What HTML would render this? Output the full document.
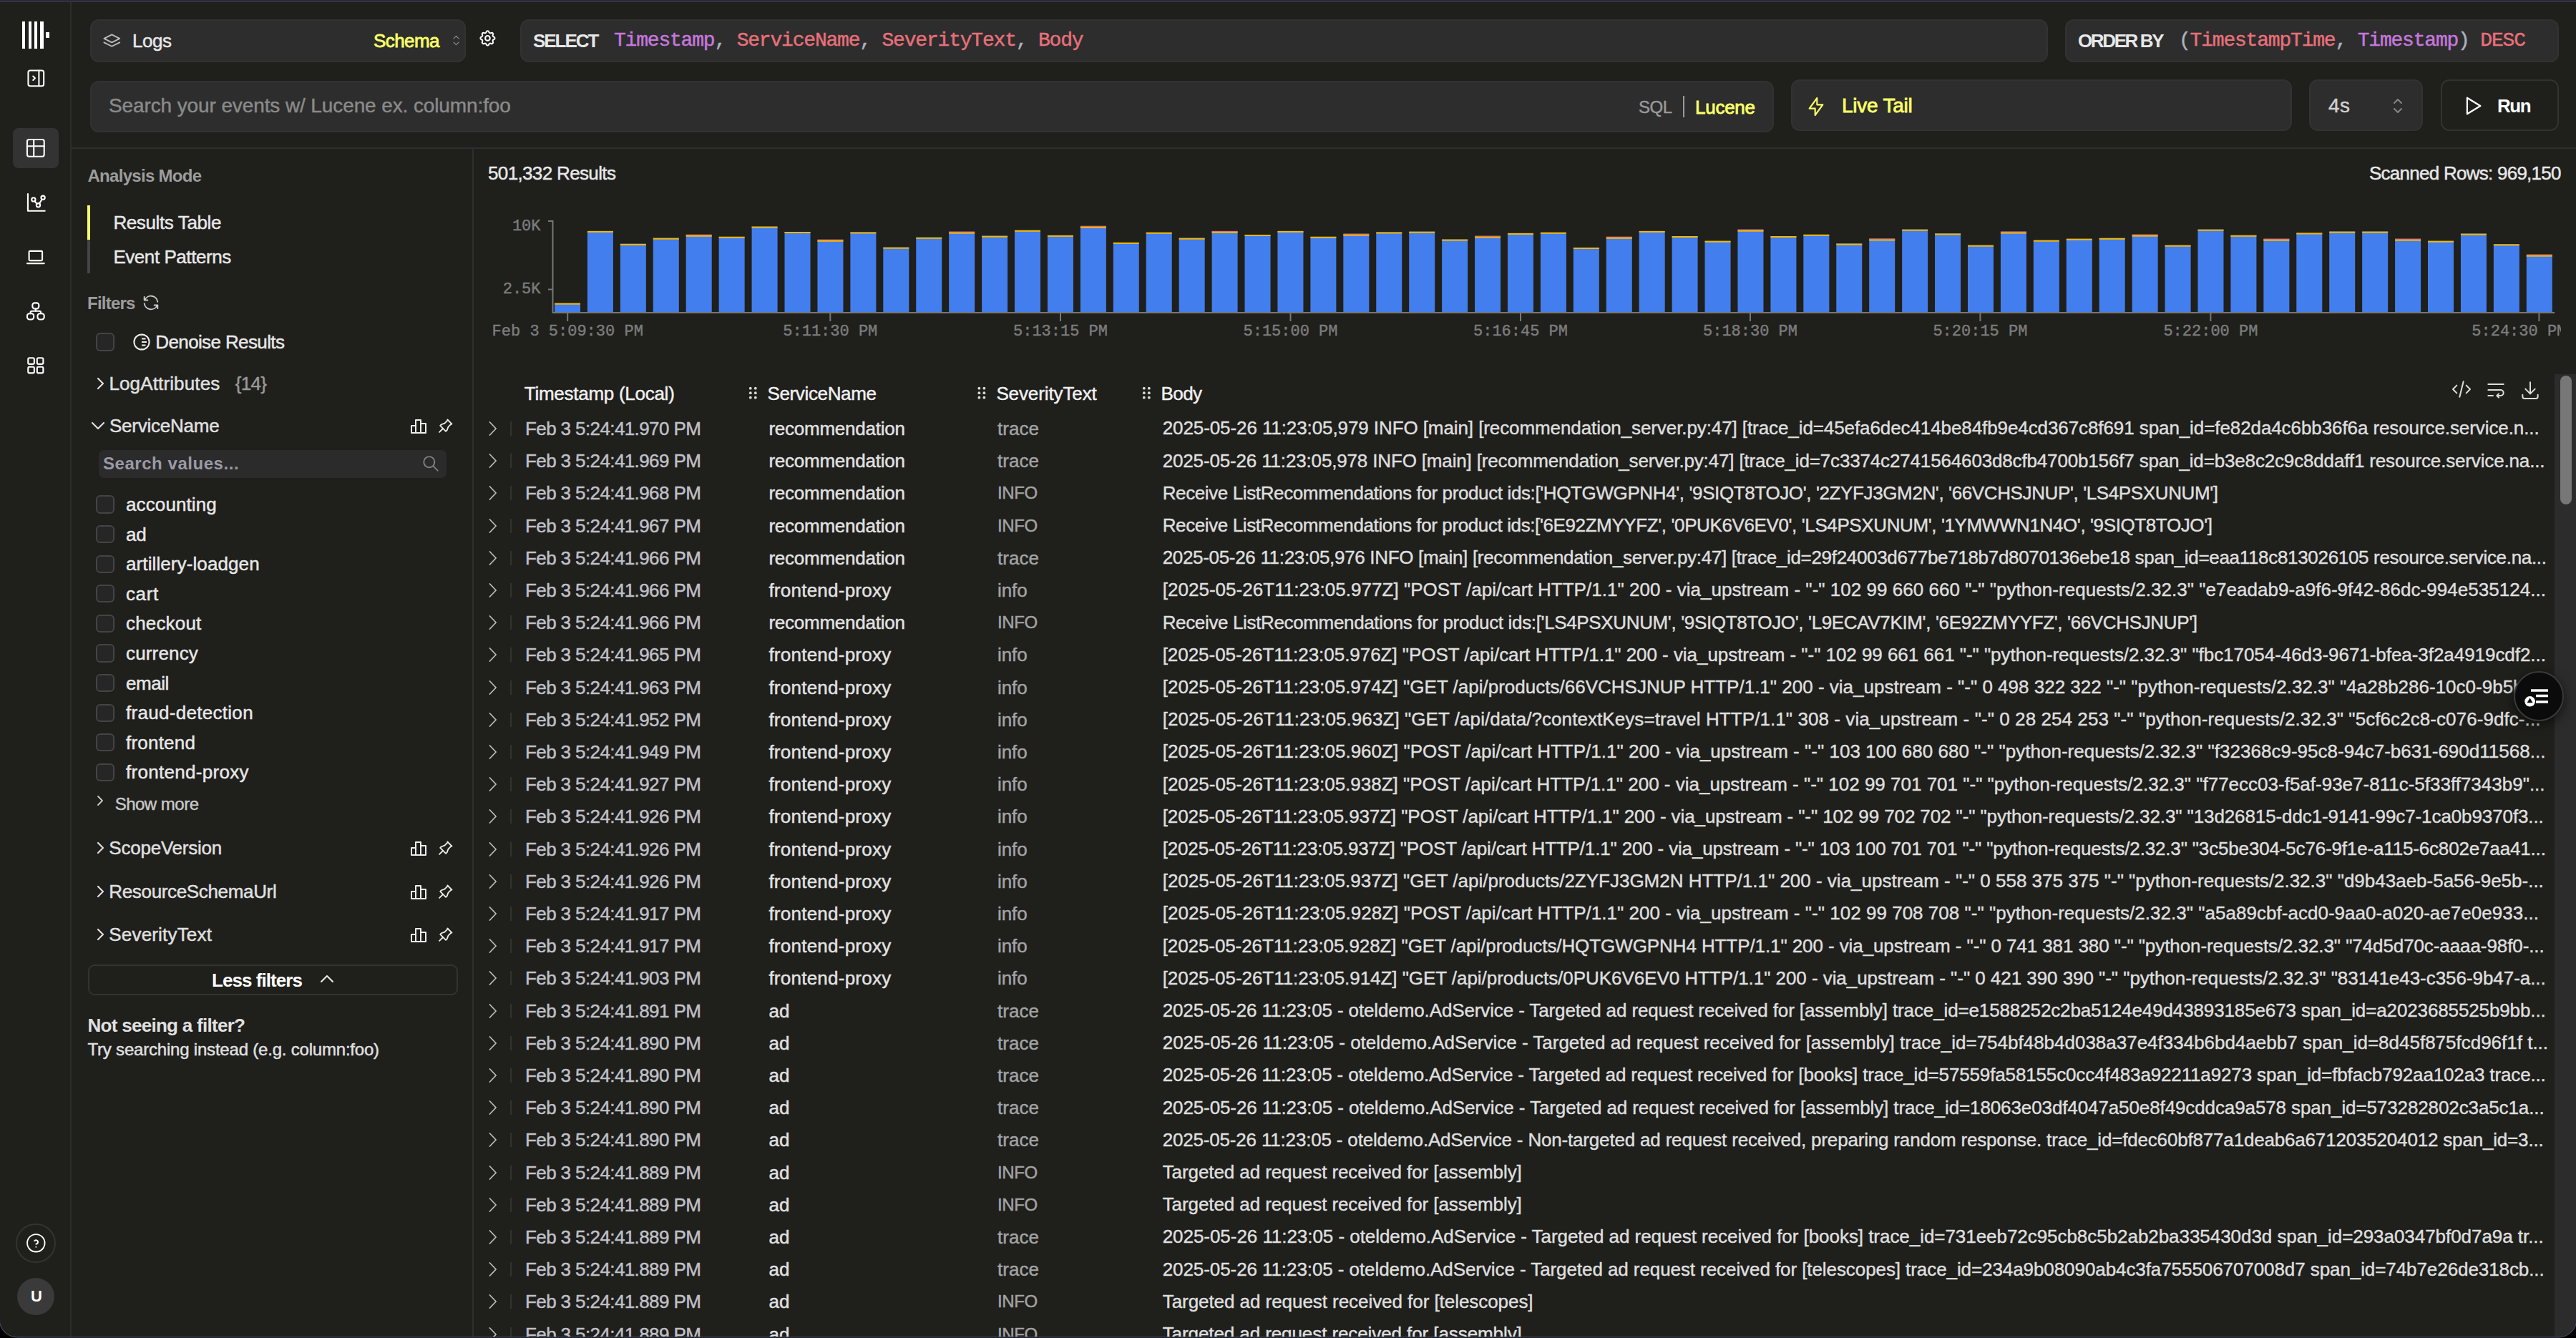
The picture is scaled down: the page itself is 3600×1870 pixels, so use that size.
<!DOCTYPE html><html><head><meta charset="utf-8"><style>
html,body{margin:0;padding:0;width:3600px;height:1870px;overflow:hidden;background:#000;}
#w{position:absolute;left:0;top:0;width:3600px;height:1868px;background:#1f1f1c;overflow:hidden;border-radius:0 0 24px 24px;}
.t{position:absolute;white-space:nowrap;-webkit-text-stroke-width:0.45px;}
.b{position:absolute;}
</style></head><body><div id="w">
<div class="b" style="left:0px;top:0px;width:3600.00px;height:2.00px;background:#282737;border-radius:0px;"></div>
<div class="b" style="left:0px;top:2px;width:3600.00px;height:1.00px;background:#3b3b45;border-radius:0px;"></div>
<div class="b" style="left:98px;top:3px;width:2.00px;height:1867.00px;background:#2c2c2c;border-radius:0px;"></div>
<div class="b" style="left:31px;top:30px;width:4.40px;height:38.00px;background:#fff;border-radius:0px;"></div>
<div class="b" style="left:39.6px;top:30px;width:4.40px;height:38.00px;background:#fff;border-radius:0px;"></div>
<div class="b" style="left:47.8px;top:30px;width:4.40px;height:38.00px;background:#fff;border-radius:0px;"></div>
<div class="b" style="left:56.2px;top:30px;width:4.40px;height:38.00px;background:#fff;border-radius:0px;"></div>
<div class="b" style="left:64.4px;top:45px;width:4.60px;height:8.00px;background:#fff;border-radius:0px;"></div>
<svg class="b" style="left:33.68px;top:92.68px;" width="32.64" height="32.64" viewBox="0 0 24 24" fill="none" stroke="#fff" stroke-width="1.5" stroke-linecap="round" stroke-linejoin="round"><rect x="4" y="4" width="16" height="16" rx="2"/><path d="M15 4v16"/><path d="M9 10l2 2l-2 2"/></svg>
<div class="b" style="left:18px;top:179px;width:64.00px;height:56.00px;background:#333333;border-radius:8px;"></div>
<svg class="b" style="left:34.16px;top:191.16px;" width="31.68" height="31.68" viewBox="0 0 24 24" fill="none" stroke="#fff" stroke-width="1.6" stroke-linecap="round" stroke-linejoin="round"><path d="M3 5a2 2 0 0 1 2 -2h14a2 2 0 0 1 2 2v14a2 2 0 0 1 -2 2h-14a2 2 0 0 1 -2 -2v-14z"/><path d="M3 10h18"/><path d="M10 3v18"/></svg>
<svg class="b" style="left:34.66px;top:267.16px;" width="31.68" height="31.68" viewBox="0 0 24 24" fill="none" stroke="#fff" stroke-width="1.6" stroke-linecap="round" stroke-linejoin="round"><path d="M3 3v18h18"/><circle cx="9" cy="9" r="2"/><circle cx="19" cy="7" r="2"/><circle cx="14" cy="15" r="2"/><path d="M10.16 10.62l2.34 2.88"/><path d="M15.088 13.328l2.837 -4.586"/></svg>
<svg class="b" style="left:34.16px;top:343.00px;" width="31.68" height="31.68" viewBox="0 0 24 24" fill="none" stroke="#fff" stroke-width="1.6" stroke-linecap="round" stroke-linejoin="round"><path d="M3 19h18"/><rect x="5" y="6" width="14" height="10" rx="1"/></svg>
<svg class="b" style="left:34.16px;top:419.16px;" width="31.68" height="31.68" viewBox="0 0 24 24" fill="none" stroke="#fff" stroke-width="1.6" stroke-linecap="round" stroke-linejoin="round"><rect x="8.6" y="3.3" width="6.8" height="6.2" rx="2.4"/><rect x="3" y="14.6" width="7" height="6.2" rx="2.4"/><rect x="14" y="14.6" width="7" height="6.2" rx="2.4"/><path d="M12 9.5v2.3"/><path d="M6.5 14.6v-1a1.7 1.7 0 0 1 1.7 -1.7h7.6a1.7 1.7 0 0 1 1.7 1.7v1"/></svg>
<svg class="b" style="left:34.16px;top:494.66px;" width="31.68" height="31.68" viewBox="0 0 24 24" fill="none" stroke="#fff" stroke-width="1.6" stroke-linecap="round" stroke-linejoin="round"><rect x="4" y="4" width="6.5" height="6.5" rx="1.4"/><rect x="13.5" y="4" width="6.5" height="6.5" rx="1.4"/><rect x="4" y="13.5" width="6.5" height="6.5" rx="1.4"/><rect x="13.5" y="13.5" width="6.5" height="6.5" rx="1.4"/></svg>
<div class="b" style="left:22.3px;top:1709.8px;width:55.4px;height:55.4px;border-radius:50%;border:2px solid #333;box-sizing:border-box"></div>
<svg class="b" style="left:33.68px;top:1721.18px;" width="32.64" height="32.64" viewBox="0 0 24 24" fill="none" stroke="#fff" stroke-width="1.4" stroke-linecap="round" stroke-linejoin="round"><circle cx="12" cy="12" r="9"/><path d="M12 16v.01"/><path d="M12 13a2 2 0 0 0 .914 -3.782a1.98 1.98 0 0 0 -2.414 .483"/></svg>
<div class="b" style="left:24px;top:1786px;width:52px;height:52px;border-radius:50%;background:#3a3a3a"></div>
<div class="t" style="left:43.00px;top:1789.50px;height:44px;line-height:44px;font-size:22px;color:#fff;font-weight:700;font-family:'Liberation Sans', sans-serif;letter-spacing:-1.391px;-webkit-text-stroke-width:0;">U</div>
<div class="b" style="left:126px;top:27px;width:525.00px;height:60.00px;background:#2d2d2d;border:2px solid #323232;box-sizing:border-box;border-radius:12px;"></div>
<svg class="b" style="left:139.68px;top:43.40px;" width="32.64" height="32.64" viewBox="0 0 24 24" fill="none" stroke="#bbb" stroke-width="1.4" stroke-linecap="round" stroke-linejoin="round"><path d="M12 4l-8 4l8 4l8 -4l-8 -4"/><path d="M4 12l8 4l8 -4"/></svg>
<div class="t" style="left:185.00px;top:31.00px;height:52px;line-height:52px;font-size:26px;color:#e8e8e8;font-weight:400;font-family:'Liberation Sans', sans-serif;letter-spacing:-0.464px;">Logs</div>
<div class="t" style="left:522.00px;top:31.00px;height:52px;line-height:52px;font-size:26px;color:#faff69;font-weight:400;font-family:'Liberation Sans', sans-serif;letter-spacing:-0.578px;-webkit-text-stroke-width:0.8px;">Schema</div>
<svg class="b" style="left:627.00px;top:46.00px;" width="21.00" height="21.00" viewBox="0 0 24 24" fill="none" stroke="#888" stroke-width="1.6" stroke-linecap="round" stroke-linejoin="round"><path d="M8 9l4 -4l4 4"/><path d="M16 15l-4 4l-4 -4"/></svg>
<svg class="b" style="left:667.56px;top:39.56px;" width="26.88" height="26.88" viewBox="0 0 24 24" fill="none" stroke="#fff" stroke-width="1.8" stroke-linecap="round" stroke-linejoin="round"><path d="M10.325 4.317c.426 -1.756 2.924 -1.756 3.35 0a1.724 1.724 0 0 0 2.573 1.066c1.543 -.94 3.31 .826 2.37 2.37a1.724 1.724 0 0 0 1.065 2.572c1.756 .426 1.756 2.924 0 3.35a1.724 1.724 0 0 0 -1.066 2.573c.94 1.543 -.826 3.31 -2.37 2.37a1.724 1.724 0 0 0 -2.572 1.065c-.426 1.756 -2.924 1.756 -3.35 0a1.724 1.724 0 0 0 -2.573 -1.066c-1.543 .94 -3.31 -.826 -2.37 -2.37a1.724 1.724 0 0 0 -1.065 -2.572c-1.756 -.426 -1.756 -2.924 0 -3.35a1.724 1.724 0 0 0 1.066 -2.573c-.94 -1.543 .826 -3.31 2.37 -2.37c1 .608 2.296 .07 2.572 -1.065z"/><circle cx="12" cy="12" r="3"/></svg>
<div class="b" style="left:727px;top:27px;width:2135.00px;height:60.00px;background:#2d2d2d;border:2px solid #323232;box-sizing:border-box;border-radius:12px;"></div>
<div class="t" style="left:745.00px;top:31.00px;height:52px;line-height:52px;font-size:26px;color:#e8e8e8;font-weight:700;font-family:'Liberation Sans', sans-serif;letter-spacing:-2.056px;-webkit-text-stroke-width:0;">SELECT</div>
<div class="t" style="left:858.00px;top:29.00px;height:56px;line-height:56px;font-size:28px;color:#e8707a;font-weight:400;font-family:'Liberation Mono', monospace;letter-spacing:-1.200px;"><span style="color:#c678dd">Timestamp</span><span style="color:#abb2bf">,</span> <span style="color:#e8707a">ServiceName</span><span style="color:#abb2bf">,</span> <span style="color:#e8707a">SeverityText</span><span style="color:#abb2bf">,</span> <span style="color:#e8707a">Body</span></div>
<div class="b" style="left:2886px;top:27px;width:690.00px;height:60.00px;background:#2d2d2d;border:2px solid #323232;box-sizing:border-box;border-radius:12px;"></div>
<div class="t" style="left:2904.00px;top:31.00px;height:52px;line-height:52px;font-size:26px;color:#e8e8e8;font-weight:700;font-family:'Liberation Sans', sans-serif;letter-spacing:-2.379px;-webkit-text-stroke-width:0;">ORDER BY</div>
<div class="t" style="left:3045.00px;top:29.00px;height:56px;line-height:56px;font-size:28px;color:#e8707a;font-weight:400;font-family:'Liberation Mono', monospace;letter-spacing:-1.200px;"><span style="color:#abb2bf">(</span><span style="color:#e8707a">TimestampTime</span><span style="color:#abb2bf">,</span> <span style="color:#c678dd">Timestamp</span><span style="color:#abb2bf">)</span> <span style="color:#e8707a">DESC</span></div>
<div class="b" style="left:126px;top:113px;width:2353.00px;height:72.00px;background:#2d2d2d;border:2px solid #323232;box-sizing:border-box;border-radius:12px;"></div>
<div class="t" style="left:152.00px;top:120.00px;height:56px;line-height:56px;font-size:28px;color:#8a8a8a;font-weight:400;font-family:'Liberation Sans', sans-serif;letter-spacing:-0.111px;">Search your events w/ Lucene ex. column:foo</div>
<div class="t" style="left:2290.00px;top:126.00px;height:48px;line-height:48px;font-size:24px;color:#9a9a9a;font-weight:400;font-family:'Liberation Sans', sans-serif;letter-spacing:-0.466px;">SQL</div>
<div class="b" style="left:2351.6px;top:134px;width:2.00px;height:30.00px;background:#9a9a9a;border-radius:0px;"></div>
<div class="t" style="left:2369.00px;top:124.00px;height:52px;line-height:52px;font-size:26px;color:#faff69;font-weight:400;font-family:'Liberation Sans', sans-serif;letter-spacing:-0.263px;-webkit-text-stroke-width:0.8px;">Lucene</div>
<div class="b" style="left:2503px;top:111px;width:700.00px;height:72.00px;background:#2d2d2d;border:2px solid #323232;box-sizing:border-box;border-radius:12px;"></div>
<svg class="b" style="left:2522.00px;top:133.00px;" width="32.00" height="32.00" viewBox="0 0 24 24" fill="none" stroke="#faff69" stroke-width="1.6" stroke-linecap="round" stroke-linejoin="round"><path d="M13 3l0 7l6 0l-8 11l0 -7l-6 0l8 -11"/></svg>
<div class="t" style="left:2574.00px;top:120.00px;height:56px;line-height:56px;font-size:28px;color:#faff69;font-weight:400;font-family:'Liberation Sans', sans-serif;letter-spacing:-0.245px;-webkit-text-stroke-width:0.8px;">Live Tail</div>
<div class="b" style="left:3227px;top:111px;width:159.00px;height:72.00px;background:#2d2d2d;border:2px solid #323232;box-sizing:border-box;border-radius:12px;"></div>
<div class="t" style="left:3254.00px;top:120.00px;height:56px;line-height:56px;font-size:28px;color:#d0d0d0;font-weight:400;font-family:'Liberation Sans', sans-serif;letter-spacing:0.422px;">4s</div>
<svg class="b" style="left:3339.00px;top:132.00px;" width="24.00" height="32.00" viewBox="0 0 24 32" fill="none" stroke="#888" stroke-width="1.8" stroke-linecap="round" stroke-linejoin="round"><path d="M7 12l5 -5l5 5"/><path d="M17 20l-5 5l-5 -5"/></svg>
<div class="b" style="left:3411px;top:111px;width:165.00px;height:72.00px;background:transparent;border:2px solid #323232;box-sizing:border-box;border-radius:12px;"></div>
<svg class="b" style="left:3438.00px;top:131.00px;" width="34.00" height="34.00" viewBox="0 0 24 24" fill="none" stroke="#fff" stroke-width="1.6" stroke-linecap="round" stroke-linejoin="round"><path d="M7 4v16l13 -8z"/></svg>
<div class="t" style="left:3490.00px;top:122.00px;height:52px;line-height:52px;font-size:26px;color:#fff;font-weight:700;font-family:'Liberation Sans', sans-serif;letter-spacing:-1.473px;-webkit-text-stroke-width:0;">Run</div>
<div class="b" style="left:100px;top:206px;width:3500.00px;height:2.00px;background:#2e2e2e;border-radius:0px;"></div>
<div class="b" style="left:660px;top:208px;width:2.00px;height:1662.00px;background:#2e2e2e;border-radius:0px;"></div>
<div class="t" style="left:122.50px;top:222.00px;height:48px;line-height:48px;font-size:24px;color:#9d9d9d;font-weight:700;font-family:'Liberation Sans', sans-serif;letter-spacing:-0.712px;-webkit-text-stroke-width:0;">Analysis Mode</div>
<div class="b" style="left:122px;top:287px;width:4.00px;height:48.00px;background:#faff69;border-radius:0px;"></div>
<div class="b" style="left:122px;top:335px;width:4.00px;height:47.00px;background:#444;border-radius:0px;"></div>
<div class="t" style="left:158.40px;top:285.00px;height:52px;line-height:52px;font-size:26px;color:#e8e8e8;font-weight:400;font-family:'Liberation Sans', sans-serif;letter-spacing:-0.384px;">Results Table</div>
<div class="t" style="left:158.40px;top:333.00px;height:52px;line-height:52px;font-size:26px;color:#e8e8e8;font-weight:400;font-family:'Liberation Sans', sans-serif;letter-spacing:-0.442px;">Event Patterns</div>
<div class="t" style="left:122.00px;top:399.50px;height:48px;line-height:48px;font-size:24px;color:#9d9d9d;font-weight:700;font-family:'Liberation Sans', sans-serif;letter-spacing:-0.772px;-webkit-text-stroke-width:0;">Filters</div>
<svg class="b" style="left:197.00px;top:409.00px;" width="28.00" height="28.00" viewBox="0 0 24 24" fill="none" stroke="#ccc" stroke-width="1.6" stroke-linecap="round" stroke-linejoin="round"><path d="M20 11a8.1 8.1 0 0 0 -15.5 -2m-.5 -4v4h4"/><path d="M4 13a8.1 8.1 0 0 0 15.5 2m.5 4v-4h-4"/></svg>
<div class="b" style="left:134.4px;top:465.4px;width:25.20px;height:25.20px;background:#262626;border:2px solid #444;box-sizing:border-box;border-radius:6px;"></div>
<svg class="b" style="left:185px;top:465px" width="26" height="26" viewBox="0 0 26 26" fill="none" stroke="#eee" stroke-width="2"><circle cx="13" cy="13" r="10.6"/><path d="M13 4.5v.5M13 21v.5M13 8.5h5.5M13 13h7M13 17.5h5.5" stroke-width="1.8"/></svg>
<div class="t" style="left:217.30px;top:452.00px;height:52px;line-height:52px;font-size:26px;color:#e8e8e8;font-weight:400;font-family:'Liberation Sans', sans-serif;letter-spacing:-0.622px;">Denoise Results</div>
<svg class="b" style="left:127.60px;top:522.50px;" width="24.00" height="26.00" viewBox="0 0 24 26" fill="none" stroke="#ddd" stroke-width="2.2" stroke-linecap="round" stroke-linejoin="round"><path d="M9 6l7 7l-7 7"/></svg>
<div class="t" style="left:152.40px;top:509.50px;height:52px;line-height:52px;font-size:26px;color:#e0e0e0;font-weight:400;font-family:'Liberation Sans', sans-serif;letter-spacing:0.140px;">LogAttributes</div>
<div class="t" style="left:328.70px;top:509.50px;height:52px;line-height:52px;font-size:26px;color:#9a9a9a;font-weight:400;font-family:'Liberation Sans', sans-serif;letter-spacing:-0.666px;">{14}</div>
<svg class="b" style="left:124.80px;top:583.00px;" width="24.00" height="24.00" viewBox="0 0 24 24" fill="none" stroke="#ddd" stroke-width="2.2" stroke-linecap="round" stroke-linejoin="round"><path d="M4 8l8 8l8 -8"/></svg>
<div class="t" style="left:153.00px;top:569.00px;height:52px;line-height:52px;font-size:26px;color:#e0e0e0;font-weight:400;font-family:'Liberation Sans', sans-serif;letter-spacing:-0.236px;">ServiceName</div>
<svg class="b" style="left:571.00px;top:581.00px;" width="30.00" height="28.00" viewBox="0 0 30 28" fill="none" stroke="#eee" stroke-width="2" stroke-linecap="round" stroke-linejoin="round"><path d="M4 14h6v10h-6z M10 6h7v18h-7z M17 11h7v13h-7z"/></svg>
<svg class="b" style="left:609.00px;top:582.00px;" width="27.00" height="27.00" viewBox="0 0 24 24" fill="none" stroke="#eee" stroke-width="1.6" stroke-linecap="round" stroke-linejoin="round"><path d="M15 4.5l-4 4l-4 1.5l-1.5 1.5l7 7l1.5 -1.5l1.5 -4l4 -4"/><path d="M9 15l-4.5 4.5"/><path d="M14.5 4l5.5 5.5"/></svg>
<div class="b" style="left:138px;top:628.5px;width:486.00px;height:39.00px;background:#2b2b2b;border-radius:7px;"></div>
<div class="t" style="left:144.00px;top:624.00px;height:48px;line-height:48px;font-size:24px;color:#9a9aa6;font-weight:700;font-family:'Liberation Sans', sans-serif;letter-spacing:0.543px;-webkit-text-stroke-width:0;">Search values...</div>
<svg class="b" style="left:589.00px;top:635.00px;" width="26.00" height="26.00" viewBox="0 0 24 24" fill="none" stroke="#888" stroke-width="1.6" stroke-linecap="round" stroke-linejoin="round"><circle cx="10" cy="10" r="7"/><path d="M21 21l-6 -6"/></svg>
<div class="b" style="left:134.4px;top:692.4px;width:25.20px;height:25.20px;background:#262626;border:2px solid #444;box-sizing:border-box;border-radius:6px;"></div>
<div class="t" style="left:176.00px;top:679.00px;height:52px;line-height:52px;font-size:26px;color:#e8e8e8;font-weight:400;font-family:'Liberation Sans', sans-serif;letter-spacing:0.115px;">accounting</div>
<div class="b" style="left:134.4px;top:734.0px;width:25.20px;height:25.20px;background:#262626;border:2px solid #444;box-sizing:border-box;border-radius:6px;"></div>
<div class="t" style="left:176.00px;top:720.60px;height:52px;line-height:52px;font-size:26px;color:#e8e8e8;font-weight:400;font-family:'Liberation Sans', sans-serif;letter-spacing:-0.222px;">ad</div>
<div class="b" style="left:134.4px;top:775.6px;width:25.20px;height:25.20px;background:#262626;border:2px solid #444;box-sizing:border-box;border-radius:6px;"></div>
<div class="t" style="left:176.00px;top:762.20px;height:52px;line-height:52px;font-size:26px;color:#e8e8e8;font-weight:400;font-family:'Liberation Sans', sans-serif;letter-spacing:0.101px;">artillery-loadgen</div>
<div class="b" style="left:134.4px;top:817.1999999999999px;width:25.20px;height:25.20px;background:#262626;border:2px solid #444;box-sizing:border-box;border-radius:6px;"></div>
<div class="t" style="left:176.00px;top:803.80px;height:52px;line-height:52px;font-size:26px;color:#e8e8e8;font-weight:400;font-family:'Liberation Sans', sans-serif;letter-spacing:0.619px;">cart</div>
<div class="b" style="left:134.4px;top:858.8px;width:25.20px;height:25.20px;background:#262626;border:2px solid #444;box-sizing:border-box;border-radius:6px;"></div>
<div class="t" style="left:176.00px;top:845.40px;height:52px;line-height:52px;font-size:26px;color:#e8e8e8;font-weight:400;font-family:'Liberation Sans', sans-serif;letter-spacing:0.175px;">checkout</div>
<div class="b" style="left:134.4px;top:900.4px;width:25.20px;height:25.20px;background:#262626;border:2px solid #444;box-sizing:border-box;border-radius:6px;"></div>
<div class="t" style="left:176.00px;top:887.00px;height:52px;line-height:52px;font-size:26px;color:#e8e8e8;font-weight:400;font-family:'Liberation Sans', sans-serif;letter-spacing:0.157px;">currency</div>
<div class="b" style="left:134.4px;top:942.0px;width:25.20px;height:25.20px;background:#262626;border:2px solid #444;box-sizing:border-box;border-radius:6px;"></div>
<div class="t" style="left:176.00px;top:928.60px;height:52px;line-height:52px;font-size:26px;color:#e8e8e8;font-weight:400;font-family:'Liberation Sans', sans-serif;letter-spacing:-0.435px;">email</div>
<div class="b" style="left:134.4px;top:983.6px;width:25.20px;height:25.20px;background:#262626;border:2px solid #444;box-sizing:border-box;border-radius:6px;"></div>
<div class="t" style="left:176.00px;top:970.20px;height:52px;line-height:52px;font-size:26px;color:#e8e8e8;font-weight:400;font-family:'Liberation Sans', sans-serif;letter-spacing:0.296px;">fraud-detection</div>
<div class="b" style="left:134.4px;top:1025.2px;width:25.20px;height:25.20px;background:#262626;border:2px solid #444;box-sizing:border-box;border-radius:6px;"></div>
<div class="t" style="left:176.00px;top:1011.80px;height:52px;line-height:52px;font-size:26px;color:#e8e8e8;font-weight:400;font-family:'Liberation Sans', sans-serif;letter-spacing:0.213px;">frontend</div>
<div class="b" style="left:134.4px;top:1066.8000000000002px;width:25.20px;height:25.20px;background:#262626;border:2px solid #444;box-sizing:border-box;border-radius:6px;"></div>
<div class="t" style="left:176.00px;top:1053.40px;height:52px;line-height:52px;font-size:26px;color:#e8e8e8;font-weight:400;font-family:'Liberation Sans', sans-serif;letter-spacing:0.303px;">frontend-proxy</div>
<svg class="b" style="left:131.00px;top:1108.00px;" width="18.00" height="22.00" viewBox="0 0 18 22" fill="none" stroke="#ccc" stroke-width="1.8" stroke-linecap="round" stroke-linejoin="round"><path d="M6 5l6 6l-6 6"/></svg>
<div class="t" style="left:160.70px;top:1100.40px;height:48px;line-height:48px;font-size:24px;color:#c8c8c8;font-weight:400;font-family:'Liberation Sans', sans-serif;letter-spacing:-0.511px;">Show more</div>
<svg class="b" style="left:127.60px;top:1172.30px;" width="24.00" height="26.00" viewBox="0 0 24 26" fill="none" stroke="#ddd" stroke-width="2.2" stroke-linecap="round" stroke-linejoin="round"><path d="M9 6l7 7l-7 7"/></svg>
<div class="t" style="left:152.30px;top:1159.30px;height:52px;line-height:52px;font-size:26px;color:#e0e0e0;font-weight:400;font-family:'Liberation Sans', sans-serif;letter-spacing:-0.223px;">ScopeVersion</div>
<svg class="b" style="left:571.00px;top:1171.30px;" width="30.00" height="28.00" viewBox="0 0 30 28" fill="none" stroke="#eee" stroke-width="2" stroke-linecap="round" stroke-linejoin="round"><path d="M4 14h6v10h-6z M10 6h7v18h-7z M17 11h7v13h-7z"/></svg>
<svg class="b" style="left:609.00px;top:1172.30px;" width="27.00" height="27.00" viewBox="0 0 24 24" fill="none" stroke="#eee" stroke-width="1.6" stroke-linecap="round" stroke-linejoin="round"><path d="M15 4.5l-4 4l-4 1.5l-1.5 1.5l7 7l1.5 -1.5l1.5 -4l4 -4"/><path d="M9 15l-4.5 4.5"/><path d="M14.5 4l5.5 5.5"/></svg>
<svg class="b" style="left:127.60px;top:1232.50px;" width="24.00" height="26.00" viewBox="0 0 24 26" fill="none" stroke="#ddd" stroke-width="2.2" stroke-linecap="round" stroke-linejoin="round"><path d="M9 6l7 7l-7 7"/></svg>
<div class="t" style="left:152.30px;top:1219.50px;height:52px;line-height:52px;font-size:26px;color:#e0e0e0;font-weight:400;font-family:'Liberation Sans', sans-serif;letter-spacing:-0.342px;">ResourceSchemaUrl</div>
<svg class="b" style="left:571.00px;top:1231.50px;" width="30.00" height="28.00" viewBox="0 0 30 28" fill="none" stroke="#eee" stroke-width="2" stroke-linecap="round" stroke-linejoin="round"><path d="M4 14h6v10h-6z M10 6h7v18h-7z M17 11h7v13h-7z"/></svg>
<svg class="b" style="left:609.00px;top:1232.50px;" width="27.00" height="27.00" viewBox="0 0 24 24" fill="none" stroke="#eee" stroke-width="1.6" stroke-linecap="round" stroke-linejoin="round"><path d="M15 4.5l-4 4l-4 1.5l-1.5 1.5l7 7l1.5 -1.5l1.5 -4l4 -4"/><path d="M9 15l-4.5 4.5"/><path d="M14.5 4l5.5 5.5"/></svg>
<svg class="b" style="left:127.60px;top:1292.70px;" width="24.00" height="26.00" viewBox="0 0 24 26" fill="none" stroke="#ddd" stroke-width="2.2" stroke-linecap="round" stroke-linejoin="round"><path d="M9 6l7 7l-7 7"/></svg>
<div class="t" style="left:152.30px;top:1279.70px;height:52px;line-height:52px;font-size:26px;color:#e0e0e0;font-weight:400;font-family:'Liberation Sans', sans-serif;letter-spacing:0.181px;">SeverityText</div>
<svg class="b" style="left:571.00px;top:1291.70px;" width="30.00" height="28.00" viewBox="0 0 30 28" fill="none" stroke="#eee" stroke-width="2" stroke-linecap="round" stroke-linejoin="round"><path d="M4 14h6v10h-6z M10 6h7v18h-7z M17 11h7v13h-7z"/></svg>
<svg class="b" style="left:609.00px;top:1292.70px;" width="27.00" height="27.00" viewBox="0 0 24 24" fill="none" stroke="#eee" stroke-width="1.6" stroke-linecap="round" stroke-linejoin="round"><path d="M15 4.5l-4 4l-4 1.5l-1.5 1.5l7 7l1.5 -1.5l1.5 -4l4 -4"/><path d="M9 15l-4.5 4.5"/><path d="M14.5 4l5.5 5.5"/></svg>
<div class="b" style="left:123px;top:1347.5px;width:517.00px;height:43.00px;background:transparent;border:2px solid #333;box-sizing:border-box;border-radius:9px;"></div>
<div class="t" style="left:296.00px;top:1343.80px;height:52px;line-height:52px;font-size:26px;color:#fff;font-weight:700;font-family:'Liberation Sans', sans-serif;letter-spacing:-0.936px;-webkit-text-stroke-width:0;">Less filters</div>
<svg class="b" style="left:446.00px;top:1358.00px;" width="22.00" height="20.00" viewBox="0 0 22 20" fill="none" stroke="#eee" stroke-width="2" stroke-linecap="round" stroke-linejoin="round"><path d="M3 14l8 -8l8 8"/></svg>
<div class="t" style="left:122.50px;top:1406.60px;height:52px;line-height:52px;font-size:26px;color:#e0e0e0;font-weight:700;font-family:'Liberation Sans', sans-serif;letter-spacing:-0.713px;-webkit-text-stroke-width:0;">Not seeing a filter?</div>
<div class="t" style="left:122.50px;top:1442.60px;height:48px;line-height:48px;font-size:24px;color:#e0e0e0;font-weight:400;font-family:'Liberation Sans', sans-serif;letter-spacing:-0.203px;">Try searching instead (e.g. column:foo)</div>
<div class="t" style="left:682.00px;top:216.40px;height:52px;line-height:52px;font-size:26px;color:#e8e8e8;font-weight:400;font-family:'Liberation Sans', sans-serif;letter-spacing:-0.643px;">501,332 Results</div>
<div class="t" style="left:3311.00px;top:216.00px;height:52px;line-height:52px;font-size:26px;color:#e8e8e8;font-weight:400;font-family:'Liberation Sans', sans-serif;letter-spacing:-0.741px;">Scanned Rows: 969,150</div>
<svg class="b" style="left:0;top:0" width="3600" height="500"><rect x="775.00" y="423.70" width="36" height="13.80" fill="#437eef"/><rect x="775.00" y="423.70" width="36" height="2" fill="#f5b800"/><rect x="820.93" y="322.90" width="36" height="114.60" fill="#437eef"/><rect x="820.93" y="322.90" width="36" height="2" fill="#f5b800"/><rect x="866.86" y="340.80" width="36" height="96.70" fill="#437eef"/><rect x="866.86" y="340.80" width="36" height="2" fill="#f5b800"/><rect x="912.79" y="332.70" width="36" height="104.80" fill="#437eef"/><rect x="912.79" y="332.70" width="36" height="2" fill="#f5b800"/><rect x="958.72" y="327.80" width="36" height="109.70" fill="#437eef"/><rect x="958.72" y="327.80" width="36" height="1.2" fill="#ef6d5f"/><rect x="958.72" y="329.00" width="36" height="1.8" fill="#f5b800"/><rect x="1004.65" y="330.80" width="36" height="106.70" fill="#437eef"/><rect x="1004.65" y="330.80" width="36" height="2" fill="#f5b800"/><rect x="1050.58" y="316.60" width="36" height="120.90" fill="#437eef"/><rect x="1050.58" y="316.60" width="36" height="2" fill="#f5b800"/><rect x="1096.51" y="324.00" width="36" height="113.50" fill="#437eef"/><rect x="1096.51" y="324.00" width="36" height="2" fill="#f5b800"/><rect x="1142.44" y="334.80" width="36" height="102.70" fill="#437eef"/><rect x="1142.44" y="334.80" width="36" height="1.2" fill="#ef6d5f"/><rect x="1142.44" y="336.00" width="36" height="1.8" fill="#f5b800"/><rect x="1188.37" y="324.50" width="36" height="113.00" fill="#437eef"/><rect x="1188.37" y="324.50" width="36" height="2" fill="#f5b800"/><rect x="1234.30" y="345.70" width="36" height="91.80" fill="#437eef"/><rect x="1234.30" y="345.70" width="36" height="2" fill="#f5b800"/><rect x="1280.23" y="331.80" width="36" height="105.70" fill="#437eef"/><rect x="1280.23" y="331.80" width="36" height="2" fill="#f5b800"/><rect x="1326.16" y="323.70" width="36" height="113.80" fill="#437eef"/><rect x="1326.16" y="323.70" width="36" height="1.2" fill="#ef6d5f"/><rect x="1326.16" y="324.90" width="36" height="1.8" fill="#f5b800"/><rect x="1372.09" y="329.70" width="36" height="107.80" fill="#437eef"/><rect x="1372.09" y="329.70" width="36" height="2" fill="#f5b800"/><rect x="1418.02" y="321.80" width="36" height="115.70" fill="#437eef"/><rect x="1418.02" y="321.80" width="36" height="2" fill="#f5b800"/><rect x="1463.95" y="328.90" width="36" height="108.60" fill="#437eef"/><rect x="1463.95" y="328.90" width="36" height="2" fill="#f5b800"/><rect x="1509.88" y="315.80" width="36" height="121.70" fill="#437eef"/><rect x="1509.88" y="315.80" width="36" height="1.2" fill="#ef6d5f"/><rect x="1509.88" y="317.00" width="36" height="1.8" fill="#f5b800"/><rect x="1555.81" y="338.90" width="36" height="98.60" fill="#437eef"/><rect x="1555.81" y="338.90" width="36" height="2" fill="#f5b800"/><rect x="1601.74" y="324.80" width="36" height="112.70" fill="#437eef"/><rect x="1601.74" y="324.80" width="36" height="2" fill="#f5b800"/><rect x="1647.67" y="332.70" width="36" height="104.80" fill="#437eef"/><rect x="1647.67" y="332.70" width="36" height="2" fill="#f5b800"/><rect x="1693.60" y="322.90" width="36" height="114.60" fill="#437eef"/><rect x="1693.60" y="322.90" width="36" height="1.2" fill="#ef6d5f"/><rect x="1693.60" y="324.10" width="36" height="1.8" fill="#f5b800"/><rect x="1739.53" y="328.00" width="36" height="109.50" fill="#437eef"/><rect x="1739.53" y="328.00" width="36" height="2" fill="#f5b800"/><rect x="1785.46" y="322.90" width="36" height="114.60" fill="#437eef"/><rect x="1785.46" y="322.90" width="36" height="2" fill="#f5b800"/><rect x="1831.39" y="330.80" width="36" height="106.70" fill="#437eef"/><rect x="1831.39" y="330.80" width="36" height="2" fill="#f5b800"/><rect x="1877.32" y="326.70" width="36" height="110.80" fill="#437eef"/><rect x="1877.32" y="326.70" width="36" height="1.2" fill="#ef6d5f"/><rect x="1877.32" y="327.90" width="36" height="1.8" fill="#f5b800"/><rect x="1923.25" y="324.50" width="36" height="113.00" fill="#437eef"/><rect x="1923.25" y="324.50" width="36" height="2" fill="#f5b800"/><rect x="1969.18" y="323.70" width="36" height="113.80" fill="#437eef"/><rect x="1969.18" y="323.70" width="36" height="2" fill="#f5b800"/><rect x="2015.11" y="334.60" width="36" height="102.90" fill="#437eef"/><rect x="2015.11" y="334.60" width="36" height="2" fill="#f5b800"/><rect x="2061.04" y="329.70" width="36" height="107.80" fill="#437eef"/><rect x="2061.04" y="329.70" width="36" height="1.2" fill="#ef6d5f"/><rect x="2061.04" y="330.90" width="36" height="1.8" fill="#f5b800"/><rect x="2106.97" y="325.90" width="36" height="111.60" fill="#437eef"/><rect x="2106.97" y="325.90" width="36" height="2" fill="#f5b800"/><rect x="2152.90" y="324.80" width="36" height="112.70" fill="#437eef"/><rect x="2152.90" y="324.80" width="36" height="2" fill="#f5b800"/><rect x="2198.83" y="346.00" width="36" height="91.50" fill="#437eef"/><rect x="2198.83" y="346.00" width="36" height="2" fill="#f5b800"/><rect x="2244.76" y="330.80" width="36" height="106.70" fill="#437eef"/><rect x="2244.76" y="330.80" width="36" height="1.2" fill="#ef6d5f"/><rect x="2244.76" y="332.00" width="36" height="1.8" fill="#f5b800"/><rect x="2290.69" y="322.90" width="36" height="114.60" fill="#437eef"/><rect x="2290.69" y="322.90" width="36" height="2" fill="#f5b800"/><rect x="2336.62" y="330.00" width="36" height="107.50" fill="#437eef"/><rect x="2336.62" y="330.00" width="36" height="2" fill="#f5b800"/><rect x="2382.55" y="336.70" width="36" height="100.80" fill="#437eef"/><rect x="2382.55" y="336.70" width="36" height="2" fill="#f5b800"/><rect x="2428.48" y="320.70" width="36" height="116.80" fill="#437eef"/><rect x="2428.48" y="320.70" width="36" height="1.2" fill="#ef6d5f"/><rect x="2428.48" y="321.90" width="36" height="1.8" fill="#f5b800"/><rect x="2474.41" y="330.00" width="36" height="107.50" fill="#437eef"/><rect x="2474.41" y="330.00" width="36" height="2" fill="#f5b800"/><rect x="2520.34" y="327.80" width="36" height="109.70" fill="#437eef"/><rect x="2520.34" y="327.80" width="36" height="2" fill="#f5b800"/><rect x="2566.27" y="340.50" width="36" height="97.00" fill="#437eef"/><rect x="2566.27" y="340.50" width="36" height="2" fill="#f5b800"/><rect x="2612.20" y="333.50" width="36" height="104.00" fill="#437eef"/><rect x="2612.20" y="333.50" width="36" height="1.2" fill="#ef6d5f"/><rect x="2612.20" y="334.70" width="36" height="1.8" fill="#f5b800"/><rect x="2658.13" y="320.70" width="36" height="116.80" fill="#437eef"/><rect x="2658.13" y="320.70" width="36" height="2" fill="#f5b800"/><rect x="2704.06" y="326.40" width="36" height="111.10" fill="#437eef"/><rect x="2704.06" y="326.40" width="36" height="2" fill="#f5b800"/><rect x="2749.99" y="342.70" width="36" height="94.80" fill="#437eef"/><rect x="2749.99" y="342.70" width="36" height="2" fill="#f5b800"/><rect x="2795.92" y="323.60" width="36" height="113.90" fill="#437eef"/><rect x="2795.92" y="323.60" width="36" height="1.2" fill="#ef6d5f"/><rect x="2795.92" y="324.80" width="36" height="1.8" fill="#f5b800"/><rect x="2841.85" y="335.70" width="36" height="101.80" fill="#437eef"/><rect x="2841.85" y="335.70" width="36" height="2" fill="#f5b800"/><rect x="2887.78" y="333.70" width="36" height="103.80" fill="#437eef"/><rect x="2887.78" y="333.70" width="36" height="2" fill="#f5b800"/><rect x="2933.71" y="332.80" width="36" height="104.70" fill="#437eef"/><rect x="2933.71" y="332.80" width="36" height="2" fill="#f5b800"/><rect x="2979.64" y="327.70" width="36" height="109.80" fill="#437eef"/><rect x="2979.64" y="327.70" width="36" height="1.2" fill="#ef6d5f"/><rect x="2979.64" y="328.90" width="36" height="1.8" fill="#f5b800"/><rect x="3025.57" y="342.70" width="36" height="94.80" fill="#437eef"/><rect x="3025.57" y="342.70" width="36" height="2" fill="#f5b800"/><rect x="3071.50" y="320.70" width="36" height="116.80" fill="#437eef"/><rect x="3071.50" y="320.70" width="36" height="2" fill="#f5b800"/><rect x="3117.43" y="328.80" width="36" height="108.70" fill="#437eef"/><rect x="3117.43" y="328.80" width="36" height="2" fill="#f5b800"/><rect x="3163.36" y="333.70" width="36" height="103.80" fill="#437eef"/><rect x="3163.36" y="333.70" width="36" height="1.2" fill="#ef6d5f"/><rect x="3163.36" y="334.90" width="36" height="1.8" fill="#f5b800"/><rect x="3209.29" y="325.50" width="36" height="112.00" fill="#437eef"/><rect x="3209.29" y="325.50" width="36" height="2" fill="#f5b800"/><rect x="3255.22" y="323.60" width="36" height="113.90" fill="#437eef"/><rect x="3255.22" y="323.60" width="36" height="2" fill="#f5b800"/><rect x="3301.15" y="323.60" width="36" height="113.90" fill="#437eef"/><rect x="3301.15" y="323.60" width="36" height="2" fill="#f5b800"/><rect x="3347.08" y="333.70" width="36" height="103.80" fill="#437eef"/><rect x="3347.08" y="333.70" width="36" height="1.2" fill="#ef6d5f"/><rect x="3347.08" y="334.90" width="36" height="1.8" fill="#f5b800"/><rect x="3393.01" y="336.70" width="36" height="100.80" fill="#437eef"/><rect x="3393.01" y="336.70" width="36" height="2" fill="#f5b800"/><rect x="3438.94" y="326.60" width="36" height="110.90" fill="#437eef"/><rect x="3438.94" y="326.60" width="36" height="2" fill="#f5b800"/><rect x="3484.87" y="341.30" width="36" height="96.20" fill="#437eef"/><rect x="3484.87" y="341.30" width="36" height="2" fill="#f5b800"/><rect x="3530.80" y="355.70" width="36" height="81.80" fill="#437eef"/><rect x="3530.80" y="355.70" width="36" height="1.2" fill="#ef6d5f"/><rect x="3530.80" y="356.90" width="36" height="1.8" fill="#f5b800"/><path d="M766 309H772.5V437H3570" stroke="#777" stroke-width="2" fill="none"/><path d="M766 404.5H772.5" stroke="#777" stroke-width="2" fill="none"/><path d="M793.2 437V449" stroke="#777" stroke-width="2"/><path d="M1160.3 437V449" stroke="#777" stroke-width="2"/><path d="M1482 437V449" stroke="#777" stroke-width="2"/><path d="M1803.5 437V449" stroke="#777" stroke-width="2"/><path d="M2125 437V449" stroke="#777" stroke-width="2"/><path d="M2446 437V449" stroke="#777" stroke-width="2"/><path d="M2767.4 437V449" stroke="#777" stroke-width="2"/><path d="M3089.4 437V449" stroke="#777" stroke-width="2"/><path d="M3548.4 437V449" stroke="#777" stroke-width="2"/></svg>
<div class="t" style="right:2844.50px;top:294.50px;height:44px;line-height:44px;font-size:22px;color:#7c7c7c;font-weight:400;font-family:'Liberation Mono', monospace;letter-spacing:0.000px;">10K</div>
<div class="t" style="right:2844.50px;top:383.00px;height:44px;line-height:44px;font-size:22px;color:#7c7c7c;font-weight:400;font-family:'Liberation Mono', monospace;letter-spacing:0.000px;">2.5K</div>
<div class="t" style="left:687.60px;top:442.00px;height:44px;line-height:44px;font-size:22px;color:#7c7c7c;font-weight:400;font-family:'Liberation Mono', monospace;letter-spacing:0.000px;">Feb 3 5:09:30 PM</div>
<div class="t" style="left:1094.30px;top:442.00px;height:44px;line-height:44px;font-size:22px;color:#7c7c7c;font-weight:400;font-family:'Liberation Mono', monospace;letter-spacing:0.000px;">5:11:30 PM</div>
<div class="t" style="left:1416.00px;top:442.00px;height:44px;line-height:44px;font-size:22px;color:#7c7c7c;font-weight:400;font-family:'Liberation Mono', monospace;letter-spacing:0.000px;">5:13:15 PM</div>
<div class="t" style="left:1737.50px;top:442.00px;height:44px;line-height:44px;font-size:22px;color:#7c7c7c;font-weight:400;font-family:'Liberation Mono', monospace;letter-spacing:0.000px;">5:15:00 PM</div>
<div class="t" style="left:2059.00px;top:442.00px;height:44px;line-height:44px;font-size:22px;color:#7c7c7c;font-weight:400;font-family:'Liberation Mono', monospace;letter-spacing:0.000px;">5:16:45 PM</div>
<div class="t" style="left:2380.00px;top:442.00px;height:44px;line-height:44px;font-size:22px;color:#7c7c7c;font-weight:400;font-family:'Liberation Mono', monospace;letter-spacing:0.000px;">5:18:30 PM</div>
<div class="t" style="left:2701.40px;top:442.00px;height:44px;line-height:44px;font-size:22px;color:#7c7c7c;font-weight:400;font-family:'Liberation Mono', monospace;letter-spacing:0.000px;">5:20:15 PM</div>
<div class="t" style="left:3023.40px;top:442.00px;height:44px;line-height:44px;font-size:22px;color:#7c7c7c;font-weight:400;font-family:'Liberation Mono', monospace;letter-spacing:0.000px;">5:22:00 PM</div>
<div class="t" style="left:3454.30px;top:442.00px;height:44px;line-height:44px;font-size:22px;color:#7c7c7c;font-weight:400;font-family:'Liberation Mono', monospace;letter-spacing:0.000px;width:124.70px;overflow:hidden;">5:24:30 PM</div>
<div class="t" style="left:732.80px;top:523.70px;height:52px;line-height:52px;font-size:26px;color:#f0f0f0;font-weight:400;font-family:'Liberation Sans', sans-serif;letter-spacing:-0.270px;">Timestamp (Local)</div>
<svg class="b" style="left:0;top:0;overflow:visible" width="1" height="1"><circle cx="1048.8" cy="542.7" r="1.9" fill="#ddd"/><circle cx="1048.8" cy="549.2" r="1.9" fill="#ddd"/><circle cx="1048.8" cy="555.7" r="1.9" fill="#ddd"/><circle cx="1055.8" cy="542.7" r="1.9" fill="#ddd"/><circle cx="1055.8" cy="549.2" r="1.9" fill="#ddd"/><circle cx="1055.8" cy="555.7" r="1.9" fill="#ddd"/></svg>
<div class="t" style="left:1072.50px;top:523.70px;height:52px;line-height:52px;font-size:26px;color:#f0f0f0;font-weight:400;font-family:'Liberation Sans', sans-serif;letter-spacing:-0.366px;">ServiceName</div>
<svg class="b" style="left:0;top:0;overflow:visible" width="1" height="1"><circle cx="1368.4" cy="542.7" r="1.9" fill="#ddd"/><circle cx="1368.4" cy="549.2" r="1.9" fill="#ddd"/><circle cx="1368.4" cy="555.7" r="1.9" fill="#ddd"/><circle cx="1375.4" cy="542.7" r="1.9" fill="#ddd"/><circle cx="1375.4" cy="549.2" r="1.9" fill="#ddd"/><circle cx="1375.4" cy="555.7" r="1.9" fill="#ddd"/></svg>
<div class="t" style="left:1392.40px;top:523.70px;height:52px;line-height:52px;font-size:26px;color:#f0f0f0;font-weight:400;font-family:'Liberation Sans', sans-serif;letter-spacing:-0.110px;">SeverityText</div>
<svg class="b" style="left:0;top:0;overflow:visible" width="1" height="1"><circle cx="1598.8" cy="542.7" r="1.9" fill="#ddd"/><circle cx="1598.8" cy="549.2" r="1.9" fill="#ddd"/><circle cx="1598.8" cy="555.7" r="1.9" fill="#ddd"/><circle cx="1605.8" cy="542.7" r="1.9" fill="#ddd"/><circle cx="1605.8" cy="549.2" r="1.9" fill="#ddd"/><circle cx="1605.8" cy="555.7" r="1.9" fill="#ddd"/></svg>
<div class="t" style="left:1622.60px;top:523.70px;height:52px;line-height:52px;font-size:26px;color:#f0f0f0;font-weight:400;font-family:'Liberation Sans', sans-serif;letter-spacing:-0.622px;">Body</div>
<svg class="b" style="left:3424.00px;top:528.00px;" width="32.00" height="32.00" viewBox="0 0 24 24" fill="none" stroke="#ddd" stroke-width="1.5" stroke-linecap="round" stroke-linejoin="round"><path d="M7 8l-4 4l4 4"/><path d="M17 8l4 4l-4 4"/><path d="M14 4l-4 16"/></svg>
<svg class="b" style="left:3472.00px;top:529.00px;" width="32.00" height="32.00" viewBox="0 0 24 24" fill="none" stroke="#ddd" stroke-width="1.5" stroke-linecap="round" stroke-linejoin="round"><path d="M4 6l16 0"/><path d="M4 18l5 0"/><path d="M4 12h13a3 3 0 0 1 0 6h-4l2 -2m0 4l-2 -2"/></svg>
<svg class="b" style="left:3520.00px;top:529.00px;" width="32.00" height="32.00" viewBox="0 0 24 24" fill="none" stroke="#ddd" stroke-width="1.5" stroke-linecap="round" stroke-linejoin="round"><path d="M4 17v2a2 2 0 0 0 2 2h12a2 2 0 0 0 2 -2v-2"/><path d="M7 11l5 5l5 -5"/><path d="M12 4l0 12"/></svg>
<div class="b" style="left:3570px;top:523px;width:30.00px;height:1347.00px;background:#2c2c2c;border-radius:0px;"></div>
<div class="b" style="left:3578px;top:525px;width:16.00px;height:180.00px;background:#777;border-radius:8px;"></div>
<svg class="b" style="left:680.00px;top:588.00px;" width="20.00" height="22.00" viewBox="0 0 20 22" fill="none" stroke="#bbb" stroke-width="1.8" stroke-linecap="round" stroke-linejoin="round"><path d="M4.5 2l8.6 9l-8.6 9"/></svg>
<div class="b" style="left:712.8px;top:589.0px;width:2.00px;height:20.00px;background:#333;border-radius:0px;"></div>
<div class="t" style="left:734.00px;top:573.00px;height:52px;line-height:52px;font-size:26px;color:#c0c0c8;font-weight:400;font-family:'Liberation Sans', sans-serif;letter-spacing:-0.605px;">Feb 3 5:24:41.970 PM</div>
<div class="t" style="left:1074.40px;top:573.00px;height:52px;line-height:52px;font-size:26px;color:#e2e2e2;font-weight:400;font-family:'Liberation Sans', sans-serif;letter-spacing:-0.243px;">recommendation</div>
<div class="t" style="left:1394.00px;top:573.00px;height:52px;line-height:52px;font-size:26px;color:#a3a3a3;font-weight:400;font-family:'Liberation Sans', sans-serif;letter-spacing:0.047px;">trace</div>
<div class="t" style="left:1624.70px;top:572.40px;height:52px;line-height:52px;font-size:26px;color:#dedede;font-weight:400;font-family:'Liberation Sans', sans-serif;letter-spacing:-0.090px;">2025-05-26 11:23:05,979 INFO [main] [recommendation_server.py:47] [trace_id=45efa6dec414be84fb9e4cd367c8f691 span_id=fe82da4c6bb36f6a resource.service.n...</div>
<svg class="b" style="left:680.00px;top:633.20px;" width="20.00" height="22.00" viewBox="0 0 20 22" fill="none" stroke="#bbb" stroke-width="1.8" stroke-linecap="round" stroke-linejoin="round"><path d="M4.5 2l8.6 9l-8.6 9"/></svg>
<div class="b" style="left:712.8px;top:634.2px;width:2.00px;height:20.00px;background:#333;border-radius:0px;"></div>
<div class="t" style="left:734.00px;top:618.20px;height:52px;line-height:52px;font-size:26px;color:#c0c0c8;font-weight:400;font-family:'Liberation Sans', sans-serif;letter-spacing:-0.605px;">Feb 3 5:24:41.969 PM</div>
<div class="t" style="left:1074.40px;top:618.20px;height:52px;line-height:52px;font-size:26px;color:#e2e2e2;font-weight:400;font-family:'Liberation Sans', sans-serif;letter-spacing:-0.243px;">recommendation</div>
<div class="t" style="left:1394.00px;top:618.20px;height:52px;line-height:52px;font-size:26px;color:#a3a3a3;font-weight:400;font-family:'Liberation Sans', sans-serif;letter-spacing:0.047px;">trace</div>
<div class="t" style="left:1624.70px;top:617.60px;height:52px;line-height:52px;font-size:26px;color:#dedede;font-weight:400;font-family:'Liberation Sans', sans-serif;letter-spacing:-0.157px;">2025-05-26 11:23:05,978 INFO [main] [recommendation_server.py:47] [trace_id=7c3374c2741564603d8cfb4700b156f7 span_id=b3e8c2c9c8ddaff1 resource.service.na...</div>
<svg class="b" style="left:680.00px;top:678.40px;" width="20.00" height="22.00" viewBox="0 0 20 22" fill="none" stroke="#bbb" stroke-width="1.8" stroke-linecap="round" stroke-linejoin="round"><path d="M4.5 2l8.6 9l-8.6 9"/></svg>
<div class="b" style="left:712.8px;top:679.4px;width:2.00px;height:20.00px;background:#333;border-radius:0px;"></div>
<div class="t" style="left:734.00px;top:663.40px;height:52px;line-height:52px;font-size:26px;color:#c0c0c8;font-weight:400;font-family:'Liberation Sans', sans-serif;letter-spacing:-0.605px;">Feb 3 5:24:41.968 PM</div>
<div class="t" style="left:1074.40px;top:663.40px;height:52px;line-height:52px;font-size:26px;color:#e2e2e2;font-weight:400;font-family:'Liberation Sans', sans-serif;letter-spacing:-0.243px;">recommendation</div>
<div class="t" style="left:1394.00px;top:665.40px;height:48px;line-height:48px;font-size:24px;color:#a3a3a3;font-weight:400;font-family:'Liberation Sans', sans-serif;letter-spacing:-0.376px;">INFO</div>
<div class="t" style="left:1624.70px;top:662.80px;height:52px;line-height:52px;font-size:26px;color:#dedede;font-weight:400;font-family:'Liberation Sans', sans-serif;letter-spacing:-0.383px;">Receive ListRecommendations for product ids:[&#x27;HQTGWGPNH4&#x27;, &#x27;9SIQT8TOJO&#x27;, &#x27;2ZYFJ3GM2N&#x27;, &#x27;66VCHSJNUP&#x27;, &#x27;LS4PSXUNUM&#x27;]</div>
<svg class="b" style="left:680.00px;top:723.60px;" width="20.00" height="22.00" viewBox="0 0 20 22" fill="none" stroke="#bbb" stroke-width="1.8" stroke-linecap="round" stroke-linejoin="round"><path d="M4.5 2l8.6 9l-8.6 9"/></svg>
<div class="b" style="left:712.8px;top:724.6px;width:2.00px;height:20.00px;background:#333;border-radius:0px;"></div>
<div class="t" style="left:734.00px;top:708.60px;height:52px;line-height:52px;font-size:26px;color:#c0c0c8;font-weight:400;font-family:'Liberation Sans', sans-serif;letter-spacing:-0.605px;">Feb 3 5:24:41.967 PM</div>
<div class="t" style="left:1074.40px;top:708.60px;height:52px;line-height:52px;font-size:26px;color:#e2e2e2;font-weight:400;font-family:'Liberation Sans', sans-serif;letter-spacing:-0.243px;">recommendation</div>
<div class="t" style="left:1394.00px;top:710.60px;height:48px;line-height:48px;font-size:24px;color:#a3a3a3;font-weight:400;font-family:'Liberation Sans', sans-serif;letter-spacing:-0.376px;">INFO</div>
<div class="t" style="left:1624.70px;top:708.00px;height:52px;line-height:52px;font-size:26px;color:#dedede;font-weight:400;font-family:'Liberation Sans', sans-serif;letter-spacing:-0.391px;">Receive ListRecommendations for product ids:[&#x27;6E92ZMYYFZ&#x27;, &#x27;0PUK6V6EV0&#x27;, &#x27;LS4PSXUNUM&#x27;, &#x27;1YMWWN1N4O&#x27;, &#x27;9SIQT8TOJO&#x27;]</div>
<svg class="b" style="left:680.00px;top:768.80px;" width="20.00" height="22.00" viewBox="0 0 20 22" fill="none" stroke="#bbb" stroke-width="1.8" stroke-linecap="round" stroke-linejoin="round"><path d="M4.5 2l8.6 9l-8.6 9"/></svg>
<div class="b" style="left:712.8px;top:769.8px;width:2.00px;height:20.00px;background:#333;border-radius:0px;"></div>
<div class="t" style="left:734.00px;top:753.80px;height:52px;line-height:52px;font-size:26px;color:#c0c0c8;font-weight:400;font-family:'Liberation Sans', sans-serif;letter-spacing:-0.605px;">Feb 3 5:24:41.966 PM</div>
<div class="t" style="left:1074.40px;top:753.80px;height:52px;line-height:52px;font-size:26px;color:#e2e2e2;font-weight:400;font-family:'Liberation Sans', sans-serif;letter-spacing:-0.243px;">recommendation</div>
<div class="t" style="left:1394.00px;top:753.80px;height:52px;line-height:52px;font-size:26px;color:#a3a3a3;font-weight:400;font-family:'Liberation Sans', sans-serif;letter-spacing:0.047px;">trace</div>
<div class="t" style="left:1624.70px;top:753.20px;height:52px;line-height:52px;font-size:26px;color:#dedede;font-weight:400;font-family:'Liberation Sans', sans-serif;letter-spacing:-0.319px;">2025-05-26 11:23:05,976 INFO [main] [recommendation_server.py:47] [trace_id=29f24003d677be718b7d8070136ebe18 span_id=eaa118c813026105 resource.service.na...</div>
<svg class="b" style="left:680.00px;top:814.00px;" width="20.00" height="22.00" viewBox="0 0 20 22" fill="none" stroke="#bbb" stroke-width="1.8" stroke-linecap="round" stroke-linejoin="round"><path d="M4.5 2l8.6 9l-8.6 9"/></svg>
<div class="b" style="left:712.8px;top:815.0px;width:2.00px;height:20.00px;background:#333;border-radius:0px;"></div>
<div class="t" style="left:734.00px;top:799.00px;height:52px;line-height:52px;font-size:26px;color:#c0c0c8;font-weight:400;font-family:'Liberation Sans', sans-serif;letter-spacing:-0.605px;">Feb 3 5:24:41.966 PM</div>
<div class="t" style="left:1074.40px;top:799.00px;height:52px;line-height:52px;font-size:26px;color:#e2e2e2;font-weight:400;font-family:'Liberation Sans', sans-serif;letter-spacing:0.242px;">frontend-proxy</div>
<div class="t" style="left:1394.00px;top:799.00px;height:52px;line-height:52px;font-size:26px;color:#a3a3a3;font-weight:400;font-family:'Liberation Sans', sans-serif;letter-spacing:-0.074px;">info</div>
<div class="t" style="left:1624.70px;top:798.40px;height:52px;line-height:52px;font-size:26px;color:#dedede;font-weight:400;font-family:'Liberation Sans', sans-serif;letter-spacing:0.034px;">[2025-05-26T11:23:05.977Z] &quot;POST /api/cart HTTP/1.1&quot; 200 - via_upstream - &quot;-&quot; 102 99 660 660 &quot;-&quot; &quot;python-requests/2.32.3&quot; &quot;e7eadab9-a9f6-9f42-86dc-994e535124...</div>
<svg class="b" style="left:680.00px;top:859.20px;" width="20.00" height="22.00" viewBox="0 0 20 22" fill="none" stroke="#bbb" stroke-width="1.8" stroke-linecap="round" stroke-linejoin="round"><path d="M4.5 2l8.6 9l-8.6 9"/></svg>
<div class="b" style="left:712.8px;top:860.2px;width:2.00px;height:20.00px;background:#333;border-radius:0px;"></div>
<div class="t" style="left:734.00px;top:844.20px;height:52px;line-height:52px;font-size:26px;color:#c0c0c8;font-weight:400;font-family:'Liberation Sans', sans-serif;letter-spacing:-0.605px;">Feb 3 5:24:41.966 PM</div>
<div class="t" style="left:1074.40px;top:844.20px;height:52px;line-height:52px;font-size:26px;color:#e2e2e2;font-weight:400;font-family:'Liberation Sans', sans-serif;letter-spacing:-0.243px;">recommendation</div>
<div class="t" style="left:1394.00px;top:846.20px;height:48px;line-height:48px;font-size:24px;color:#a3a3a3;font-weight:400;font-family:'Liberation Sans', sans-serif;letter-spacing:-0.376px;">INFO</div>
<div class="t" style="left:1624.70px;top:843.60px;height:52px;line-height:52px;font-size:26px;color:#dedede;font-weight:400;font-family:'Liberation Sans', sans-serif;letter-spacing:-0.355px;">Receive ListRecommendations for product ids:[&#x27;LS4PSXUNUM&#x27;, &#x27;9SIQT8TOJO&#x27;, &#x27;L9ECAV7KIM&#x27;, &#x27;6E92ZMYYFZ&#x27;, &#x27;66VCHSJNUP&#x27;]</div>
<svg class="b" style="left:680.00px;top:904.40px;" width="20.00" height="22.00" viewBox="0 0 20 22" fill="none" stroke="#bbb" stroke-width="1.8" stroke-linecap="round" stroke-linejoin="round"><path d="M4.5 2l8.6 9l-8.6 9"/></svg>
<div class="b" style="left:712.8px;top:905.4000000000001px;width:2.00px;height:20.00px;background:#333;border-radius:0px;"></div>
<div class="t" style="left:734.00px;top:889.40px;height:52px;line-height:52px;font-size:26px;color:#c0c0c8;font-weight:400;font-family:'Liberation Sans', sans-serif;letter-spacing:-0.605px;">Feb 3 5:24:41.965 PM</div>
<div class="t" style="left:1074.40px;top:889.40px;height:52px;line-height:52px;font-size:26px;color:#e2e2e2;font-weight:400;font-family:'Liberation Sans', sans-serif;letter-spacing:0.242px;">frontend-proxy</div>
<div class="t" style="left:1394.00px;top:889.40px;height:52px;line-height:52px;font-size:26px;color:#a3a3a3;font-weight:400;font-family:'Liberation Sans', sans-serif;letter-spacing:-0.074px;">info</div>
<div class="t" style="left:1624.70px;top:888.80px;height:52px;line-height:52px;font-size:26px;color:#dedede;font-weight:400;font-family:'Liberation Sans', sans-serif;letter-spacing:-0.047px;">[2025-05-26T11:23:05.976Z] &quot;POST /api/cart HTTP/1.1&quot; 200 - via_upstream - &quot;-&quot; 102 99 661 661 &quot;-&quot; &quot;python-requests/2.32.3&quot; &quot;fbc17054-46d3-9671-bfea-3f2a4919cdf2...</div>
<svg class="b" style="left:680.00px;top:949.60px;" width="20.00" height="22.00" viewBox="0 0 20 22" fill="none" stroke="#bbb" stroke-width="1.8" stroke-linecap="round" stroke-linejoin="round"><path d="M4.5 2l8.6 9l-8.6 9"/></svg>
<div class="b" style="left:712.8px;top:950.6px;width:2.00px;height:20.00px;background:#333;border-radius:0px;"></div>
<div class="t" style="left:734.00px;top:934.60px;height:52px;line-height:52px;font-size:26px;color:#c0c0c8;font-weight:400;font-family:'Liberation Sans', sans-serif;letter-spacing:-0.605px;">Feb 3 5:24:41.963 PM</div>
<div class="t" style="left:1074.40px;top:934.60px;height:52px;line-height:52px;font-size:26px;color:#e2e2e2;font-weight:400;font-family:'Liberation Sans', sans-serif;letter-spacing:0.242px;">frontend-proxy</div>
<div class="t" style="left:1394.00px;top:934.60px;height:52px;line-height:52px;font-size:26px;color:#a3a3a3;font-weight:400;font-family:'Liberation Sans', sans-serif;letter-spacing:-0.074px;">info</div>
<div class="t" style="left:1624.70px;top:934.00px;height:52px;line-height:52px;font-size:26px;color:#dedede;font-weight:400;font-family:'Liberation Sans', sans-serif;letter-spacing:0.004px;">[2025-05-26T11:23:05.974Z] &quot;GET /api/products/66VCHSJNUP HTTP/1.1&quot; 200 - via_upstream - &quot;-&quot; 0 498 322 322 &quot;-&quot; &quot;python-requests/2.32.3&quot; &quot;4a28b286-10c0-9b5b-...</div>
<svg class="b" style="left:680.00px;top:994.80px;" width="20.00" height="22.00" viewBox="0 0 20 22" fill="none" stroke="#bbb" stroke-width="1.8" stroke-linecap="round" stroke-linejoin="round"><path d="M4.5 2l8.6 9l-8.6 9"/></svg>
<div class="b" style="left:712.8px;top:995.8px;width:2.00px;height:20.00px;background:#333;border-radius:0px;"></div>
<div class="t" style="left:734.00px;top:979.80px;height:52px;line-height:52px;font-size:26px;color:#c0c0c8;font-weight:400;font-family:'Liberation Sans', sans-serif;letter-spacing:-0.605px;">Feb 3 5:24:41.952 PM</div>
<div class="t" style="left:1074.40px;top:979.80px;height:52px;line-height:52px;font-size:26px;color:#e2e2e2;font-weight:400;font-family:'Liberation Sans', sans-serif;letter-spacing:0.242px;">frontend-proxy</div>
<div class="t" style="left:1394.00px;top:979.80px;height:52px;line-height:52px;font-size:26px;color:#a3a3a3;font-weight:400;font-family:'Liberation Sans', sans-serif;letter-spacing:-0.074px;">info</div>
<div class="t" style="left:1624.70px;top:979.20px;height:52px;line-height:52px;font-size:26px;color:#dedede;font-weight:400;font-family:'Liberation Sans', sans-serif;letter-spacing:0.073px;">[2025-05-26T11:23:05.963Z] &quot;GET /api/data/?contextKeys=travel HTTP/1.1&quot; 308 - via_upstream - &quot;-&quot; 0 28 254 253 &quot;-&quot; &quot;python-requests/2.32.3&quot; &quot;5cf6c2c8-c076-9dfc-...</div>
<svg class="b" style="left:680.00px;top:1040.00px;" width="20.00" height="22.00" viewBox="0 0 20 22" fill="none" stroke="#bbb" stroke-width="1.8" stroke-linecap="round" stroke-linejoin="round"><path d="M4.5 2l8.6 9l-8.6 9"/></svg>
<div class="b" style="left:712.8px;top:1041.0px;width:2.00px;height:20.00px;background:#333;border-radius:0px;"></div>
<div class="t" style="left:734.00px;top:1025.00px;height:52px;line-height:52px;font-size:26px;color:#c0c0c8;font-weight:400;font-family:'Liberation Sans', sans-serif;letter-spacing:-0.605px;">Feb 3 5:24:41.949 PM</div>
<div class="t" style="left:1074.40px;top:1025.00px;height:52px;line-height:52px;font-size:26px;color:#e2e2e2;font-weight:400;font-family:'Liberation Sans', sans-serif;letter-spacing:0.242px;">frontend-proxy</div>
<div class="t" style="left:1394.00px;top:1025.00px;height:52px;line-height:52px;font-size:26px;color:#a3a3a3;font-weight:400;font-family:'Liberation Sans', sans-serif;letter-spacing:-0.074px;">info</div>
<div class="t" style="left:1624.70px;top:1024.40px;height:52px;line-height:52px;font-size:26px;color:#dedede;font-weight:400;font-family:'Liberation Sans', sans-serif;letter-spacing:0.016px;">[2025-05-26T11:23:05.960Z] &quot;POST /api/cart HTTP/1.1&quot; 200 - via_upstream - &quot;-&quot; 103 100 680 680 &quot;-&quot; &quot;python-requests/2.32.3&quot; &quot;f32368c9-95c8-94c7-b631-690d11568...</div>
<svg class="b" style="left:680.00px;top:1085.20px;" width="20.00" height="22.00" viewBox="0 0 20 22" fill="none" stroke="#bbb" stroke-width="1.8" stroke-linecap="round" stroke-linejoin="round"><path d="M4.5 2l8.6 9l-8.6 9"/></svg>
<div class="b" style="left:712.8px;top:1086.2px;width:2.00px;height:20.00px;background:#333;border-radius:0px;"></div>
<div class="t" style="left:734.00px;top:1070.20px;height:52px;line-height:52px;font-size:26px;color:#c0c0c8;font-weight:400;font-family:'Liberation Sans', sans-serif;letter-spacing:-0.605px;">Feb 3 5:24:41.927 PM</div>
<div class="t" style="left:1074.40px;top:1070.20px;height:52px;line-height:52px;font-size:26px;color:#e2e2e2;font-weight:400;font-family:'Liberation Sans', sans-serif;letter-spacing:0.242px;">frontend-proxy</div>
<div class="t" style="left:1394.00px;top:1070.20px;height:52px;line-height:52px;font-size:26px;color:#a3a3a3;font-weight:400;font-family:'Liberation Sans', sans-serif;letter-spacing:-0.074px;">info</div>
<div class="t" style="left:1624.70px;top:1069.60px;height:52px;line-height:52px;font-size:26px;color:#dedede;font-weight:400;font-family:'Liberation Sans', sans-serif;letter-spacing:0.001px;">[2025-05-26T11:23:05.938Z] &quot;POST /api/cart HTTP/1.1&quot; 200 - via_upstream - &quot;-&quot; 102 99 701 701 &quot;-&quot; &quot;python-requests/2.32.3&quot; &quot;f77ecc03-f5af-93e7-811c-5f33ff7343b9&quot;...</div>
<svg class="b" style="left:680.00px;top:1130.40px;" width="20.00" height="22.00" viewBox="0 0 20 22" fill="none" stroke="#bbb" stroke-width="1.8" stroke-linecap="round" stroke-linejoin="round"><path d="M4.5 2l8.6 9l-8.6 9"/></svg>
<div class="b" style="left:712.8px;top:1131.4px;width:2.00px;height:20.00px;background:#333;border-radius:0px;"></div>
<div class="t" style="left:734.00px;top:1115.40px;height:52px;line-height:52px;font-size:26px;color:#c0c0c8;font-weight:400;font-family:'Liberation Sans', sans-serif;letter-spacing:-0.605px;">Feb 3 5:24:41.926 PM</div>
<div class="t" style="left:1074.40px;top:1115.40px;height:52px;line-height:52px;font-size:26px;color:#e2e2e2;font-weight:400;font-family:'Liberation Sans', sans-serif;letter-spacing:0.242px;">frontend-proxy</div>
<div class="t" style="left:1394.00px;top:1115.40px;height:52px;line-height:52px;font-size:26px;color:#a3a3a3;font-weight:400;font-family:'Liberation Sans', sans-serif;letter-spacing:-0.074px;">info</div>
<div class="t" style="left:1624.70px;top:1114.80px;height:52px;line-height:52px;font-size:26px;color:#dedede;font-weight:400;font-family:'Liberation Sans', sans-serif;letter-spacing:-0.103px;">[2025-05-26T11:23:05.937Z] &quot;POST /api/cart HTTP/1.1&quot; 200 - via_upstream - &quot;-&quot; 102 99 702 702 &quot;-&quot; &quot;python-requests/2.32.3&quot; &quot;13d26815-ddc1-9141-99c7-1ca0b9370f3...</div>
<svg class="b" style="left:680.00px;top:1175.60px;" width="20.00" height="22.00" viewBox="0 0 20 22" fill="none" stroke="#bbb" stroke-width="1.8" stroke-linecap="round" stroke-linejoin="round"><path d="M4.5 2l8.6 9l-8.6 9"/></svg>
<div class="b" style="left:712.8px;top:1176.6px;width:2.00px;height:20.00px;background:#333;border-radius:0px;"></div>
<div class="t" style="left:734.00px;top:1160.60px;height:52px;line-height:52px;font-size:26px;color:#c0c0c8;font-weight:400;font-family:'Liberation Sans', sans-serif;letter-spacing:-0.605px;">Feb 3 5:24:41.926 PM</div>
<div class="t" style="left:1074.40px;top:1160.60px;height:52px;line-height:52px;font-size:26px;color:#e2e2e2;font-weight:400;font-family:'Liberation Sans', sans-serif;letter-spacing:0.242px;">frontend-proxy</div>
<div class="t" style="left:1394.00px;top:1160.60px;height:52px;line-height:52px;font-size:26px;color:#a3a3a3;font-weight:400;font-family:'Liberation Sans', sans-serif;letter-spacing:-0.074px;">info</div>
<div class="t" style="left:1624.70px;top:1160.00px;height:52px;line-height:52px;font-size:26px;color:#dedede;font-weight:400;font-family:'Liberation Sans', sans-serif;letter-spacing:-0.161px;">[2025-05-26T11:23:05.937Z] &quot;POST /api/cart HTTP/1.1&quot; 200 - via_upstream - &quot;-&quot; 103 100 701 701 &quot;-&quot; &quot;python-requests/2.32.3&quot; &quot;3c5be304-5c76-9f1e-a115-6c802e7aa41...</div>
<svg class="b" style="left:680.00px;top:1220.80px;" width="20.00" height="22.00" viewBox="0 0 20 22" fill="none" stroke="#bbb" stroke-width="1.8" stroke-linecap="round" stroke-linejoin="round"><path d="M4.5 2l8.6 9l-8.6 9"/></svg>
<div class="b" style="left:712.8px;top:1221.8000000000002px;width:2.00px;height:20.00px;background:#333;border-radius:0px;"></div>
<div class="t" style="left:734.00px;top:1205.80px;height:52px;line-height:52px;font-size:26px;color:#c0c0c8;font-weight:400;font-family:'Liberation Sans', sans-serif;letter-spacing:-0.605px;">Feb 3 5:24:41.926 PM</div>
<div class="t" style="left:1074.40px;top:1205.80px;height:52px;line-height:52px;font-size:26px;color:#e2e2e2;font-weight:400;font-family:'Liberation Sans', sans-serif;letter-spacing:0.242px;">frontend-proxy</div>
<div class="t" style="left:1394.00px;top:1205.80px;height:52px;line-height:52px;font-size:26px;color:#a3a3a3;font-weight:400;font-family:'Liberation Sans', sans-serif;letter-spacing:-0.074px;">info</div>
<div class="t" style="left:1624.70px;top:1205.20px;height:52px;line-height:52px;font-size:26px;color:#dedede;font-weight:400;font-family:'Liberation Sans', sans-serif;letter-spacing:-0.003px;">[2025-05-26T11:23:05.937Z] &quot;GET /api/products/2ZYFJ3GM2N HTTP/1.1&quot; 200 - via_upstream - &quot;-&quot; 0 558 375 375 &quot;-&quot; &quot;python-requests/2.32.3&quot; &quot;d9b43aeb-5a56-9e5b-...</div>
<svg class="b" style="left:680.00px;top:1266.00px;" width="20.00" height="22.00" viewBox="0 0 20 22" fill="none" stroke="#bbb" stroke-width="1.8" stroke-linecap="round" stroke-linejoin="round"><path d="M4.5 2l8.6 9l-8.6 9"/></svg>
<div class="b" style="left:712.8px;top:1267.0px;width:2.00px;height:20.00px;background:#333;border-radius:0px;"></div>
<div class="t" style="left:734.00px;top:1251.00px;height:52px;line-height:52px;font-size:26px;color:#c0c0c8;font-weight:400;font-family:'Liberation Sans', sans-serif;letter-spacing:-0.605px;">Feb 3 5:24:41.917 PM</div>
<div class="t" style="left:1074.40px;top:1251.00px;height:52px;line-height:52px;font-size:26px;color:#e2e2e2;font-weight:400;font-family:'Liberation Sans', sans-serif;letter-spacing:0.242px;">frontend-proxy</div>
<div class="t" style="left:1394.00px;top:1251.00px;height:52px;line-height:52px;font-size:26px;color:#a3a3a3;font-weight:400;font-family:'Liberation Sans', sans-serif;letter-spacing:-0.074px;">info</div>
<div class="t" style="left:1624.70px;top:1250.40px;height:52px;line-height:52px;font-size:26px;color:#dedede;font-weight:400;font-family:'Liberation Sans', sans-serif;letter-spacing:0.026px;">[2025-05-26T11:23:05.928Z] &quot;POST /api/cart HTTP/1.1&quot; 200 - via_upstream - &quot;-&quot; 102 99 708 708 &quot;-&quot; &quot;python-requests/2.32.3&quot; &quot;a5a89cbf-acd0-9aa0-a020-ae7e0e933...</div>
<svg class="b" style="left:680.00px;top:1311.20px;" width="20.00" height="22.00" viewBox="0 0 20 22" fill="none" stroke="#bbb" stroke-width="1.8" stroke-linecap="round" stroke-linejoin="round"><path d="M4.5 2l8.6 9l-8.6 9"/></svg>
<div class="b" style="left:712.8px;top:1312.2px;width:2.00px;height:20.00px;background:#333;border-radius:0px;"></div>
<div class="t" style="left:734.00px;top:1296.20px;height:52px;line-height:52px;font-size:26px;color:#c0c0c8;font-weight:400;font-family:'Liberation Sans', sans-serif;letter-spacing:-0.605px;">Feb 3 5:24:41.917 PM</div>
<div class="t" style="left:1074.40px;top:1296.20px;height:52px;line-height:52px;font-size:26px;color:#e2e2e2;font-weight:400;font-family:'Liberation Sans', sans-serif;letter-spacing:0.242px;">frontend-proxy</div>
<div class="t" style="left:1394.00px;top:1296.20px;height:52px;line-height:52px;font-size:26px;color:#a3a3a3;font-weight:400;font-family:'Liberation Sans', sans-serif;letter-spacing:-0.074px;">info</div>
<div class="t" style="left:1624.70px;top:1295.60px;height:52px;line-height:52px;font-size:26px;color:#dedede;font-weight:400;font-family:'Liberation Sans', sans-serif;letter-spacing:-0.089px;">[2025-05-26T11:23:05.928Z] &quot;GET /api/products/HQTGWGPNH4 HTTP/1.1&quot; 200 - via_upstream - &quot;-&quot; 0 741 381 380 &quot;-&quot; &quot;python-requests/2.32.3&quot; &quot;74d5d70c-aaaa-98f0-...</div>
<svg class="b" style="left:680.00px;top:1356.40px;" width="20.00" height="22.00" viewBox="0 0 20 22" fill="none" stroke="#bbb" stroke-width="1.8" stroke-linecap="round" stroke-linejoin="round"><path d="M4.5 2l8.6 9l-8.6 9"/></svg>
<div class="b" style="left:712.8px;top:1357.4px;width:2.00px;height:20.00px;background:#333;border-radius:0px;"></div>
<div class="t" style="left:734.00px;top:1341.40px;height:52px;line-height:52px;font-size:26px;color:#c0c0c8;font-weight:400;font-family:'Liberation Sans', sans-serif;letter-spacing:-0.605px;">Feb 3 5:24:41.903 PM</div>
<div class="t" style="left:1074.40px;top:1341.40px;height:52px;line-height:52px;font-size:26px;color:#e2e2e2;font-weight:400;font-family:'Liberation Sans', sans-serif;letter-spacing:0.242px;">frontend-proxy</div>
<div class="t" style="left:1394.00px;top:1341.40px;height:52px;line-height:52px;font-size:26px;color:#a3a3a3;font-weight:400;font-family:'Liberation Sans', sans-serif;letter-spacing:-0.074px;">info</div>
<div class="t" style="left:1624.70px;top:1340.80px;height:52px;line-height:52px;font-size:26px;color:#dedede;font-weight:400;font-family:'Liberation Sans', sans-serif;letter-spacing:-0.049px;">[2025-05-26T11:23:05.914Z] &quot;GET /api/products/0PUK6V6EV0 HTTP/1.1&quot; 200 - via_upstream - &quot;-&quot; 0 421 390 390 &quot;-&quot; &quot;python-requests/2.32.3&quot; &quot;83141e43-c356-9b47-a...</div>
<svg class="b" style="left:680.00px;top:1401.60px;" width="20.00" height="22.00" viewBox="0 0 20 22" fill="none" stroke="#bbb" stroke-width="1.8" stroke-linecap="round" stroke-linejoin="round"><path d="M4.5 2l8.6 9l-8.6 9"/></svg>
<div class="b" style="left:712.8px;top:1402.6px;width:2.00px;height:20.00px;background:#333;border-radius:0px;"></div>
<div class="t" style="left:734.00px;top:1386.60px;height:52px;line-height:52px;font-size:26px;color:#c0c0c8;font-weight:400;font-family:'Liberation Sans', sans-serif;letter-spacing:-0.605px;">Feb 3 5:24:41.891 PM</div>
<div class="t" style="left:1074.40px;top:1386.60px;height:52px;line-height:52px;font-size:26px;color:#e2e2e2;font-weight:400;font-family:'Liberation Sans', sans-serif;letter-spacing:0.078px;">ad</div>
<div class="t" style="left:1394.00px;top:1386.60px;height:52px;line-height:52px;font-size:26px;color:#a3a3a3;font-weight:400;font-family:'Liberation Sans', sans-serif;letter-spacing:0.047px;">trace</div>
<div class="t" style="left:1624.70px;top:1386.00px;height:52px;line-height:52px;font-size:26px;color:#dedede;font-weight:400;font-family:'Liberation Sans', sans-serif;letter-spacing:-0.123px;">2025-05-26 11:23:05 - oteldemo.AdService - Targeted ad request received for [assembly] trace_id=e1588252c2ba5124e49d43893185e673 span_id=a2023685525b9bb...</div>
<svg class="b" style="left:680.00px;top:1446.80px;" width="20.00" height="22.00" viewBox="0 0 20 22" fill="none" stroke="#bbb" stroke-width="1.8" stroke-linecap="round" stroke-linejoin="round"><path d="M4.5 2l8.6 9l-8.6 9"/></svg>
<div class="b" style="left:712.8px;top:1447.8000000000002px;width:2.00px;height:20.00px;background:#333;border-radius:0px;"></div>
<div class="t" style="left:734.00px;top:1431.80px;height:52px;line-height:52px;font-size:26px;color:#c0c0c8;font-weight:400;font-family:'Liberation Sans', sans-serif;letter-spacing:-0.605px;">Feb 3 5:24:41.890 PM</div>
<div class="t" style="left:1074.40px;top:1431.80px;height:52px;line-height:52px;font-size:26px;color:#e2e2e2;font-weight:400;font-family:'Liberation Sans', sans-serif;letter-spacing:0.078px;">ad</div>
<div class="t" style="left:1394.00px;top:1431.80px;height:52px;line-height:52px;font-size:26px;color:#a3a3a3;font-weight:400;font-family:'Liberation Sans', sans-serif;letter-spacing:0.047px;">trace</div>
<div class="t" style="left:1624.70px;top:1431.20px;height:52px;line-height:52px;font-size:26px;color:#dedede;font-weight:400;font-family:'Liberation Sans', sans-serif;letter-spacing:-0.007px;">2025-05-26 11:23:05 - oteldemo.AdService - Targeted ad request received for [assembly] trace_id=754bf48b4d038a37e4f334b6bd4aebb7 span_id=8d45f875fcd96f1f t...</div>
<svg class="b" style="left:680.00px;top:1492.00px;" width="20.00" height="22.00" viewBox="0 0 20 22" fill="none" stroke="#bbb" stroke-width="1.8" stroke-linecap="round" stroke-linejoin="round"><path d="M4.5 2l8.6 9l-8.6 9"/></svg>
<div class="b" style="left:712.8px;top:1493.0px;width:2.00px;height:20.00px;background:#333;border-radius:0px;"></div>
<div class="t" style="left:734.00px;top:1477.00px;height:52px;line-height:52px;font-size:26px;color:#c0c0c8;font-weight:400;font-family:'Liberation Sans', sans-serif;letter-spacing:-0.605px;">Feb 3 5:24:41.890 PM</div>
<div class="t" style="left:1074.40px;top:1477.00px;height:52px;line-height:52px;font-size:26px;color:#e2e2e2;font-weight:400;font-family:'Liberation Sans', sans-serif;letter-spacing:0.078px;">ad</div>
<div class="t" style="left:1394.00px;top:1477.00px;height:52px;line-height:52px;font-size:26px;color:#a3a3a3;font-weight:400;font-family:'Liberation Sans', sans-serif;letter-spacing:0.047px;">trace</div>
<div class="t" style="left:1624.70px;top:1476.40px;height:52px;line-height:52px;font-size:26px;color:#dedede;font-weight:400;font-family:'Liberation Sans', sans-serif;letter-spacing:-0.143px;">2025-05-26 11:23:05 - oteldemo.AdService - Targeted ad request received for [books] trace_id=57559fa58155c0cc4f483a92211a9273 span_id=fbfacb792aa102a3 trace...</div>
<svg class="b" style="left:680.00px;top:1537.20px;" width="20.00" height="22.00" viewBox="0 0 20 22" fill="none" stroke="#bbb" stroke-width="1.8" stroke-linecap="round" stroke-linejoin="round"><path d="M4.5 2l8.6 9l-8.6 9"/></svg>
<div class="b" style="left:712.8px;top:1538.2px;width:2.00px;height:20.00px;background:#333;border-radius:0px;"></div>
<div class="t" style="left:734.00px;top:1522.20px;height:52px;line-height:52px;font-size:26px;color:#c0c0c8;font-weight:400;font-family:'Liberation Sans', sans-serif;letter-spacing:-0.605px;">Feb 3 5:24:41.890 PM</div>
<div class="t" style="left:1074.40px;top:1522.20px;height:52px;line-height:52px;font-size:26px;color:#e2e2e2;font-weight:400;font-family:'Liberation Sans', sans-serif;letter-spacing:0.078px;">ad</div>
<div class="t" style="left:1394.00px;top:1522.20px;height:52px;line-height:52px;font-size:26px;color:#a3a3a3;font-weight:400;font-family:'Liberation Sans', sans-serif;letter-spacing:0.047px;">trace</div>
<div class="t" style="left:1624.70px;top:1521.60px;height:52px;line-height:52px;font-size:26px;color:#dedede;font-weight:400;font-family:'Liberation Sans', sans-serif;letter-spacing:-0.107px;">2025-05-26 11:23:05 - oteldemo.AdService - Targeted ad request received for [assembly] trace_id=18063e03df4047a50e8f49cddca9a578 span_id=573282802c3a5c1a...</div>
<svg class="b" style="left:680.00px;top:1582.40px;" width="20.00" height="22.00" viewBox="0 0 20 22" fill="none" stroke="#bbb" stroke-width="1.8" stroke-linecap="round" stroke-linejoin="round"><path d="M4.5 2l8.6 9l-8.6 9"/></svg>
<div class="b" style="left:712.8px;top:1583.4px;width:2.00px;height:20.00px;background:#333;border-radius:0px;"></div>
<div class="t" style="left:734.00px;top:1567.40px;height:52px;line-height:52px;font-size:26px;color:#c0c0c8;font-weight:400;font-family:'Liberation Sans', sans-serif;letter-spacing:-0.605px;">Feb 3 5:24:41.890 PM</div>
<div class="t" style="left:1074.40px;top:1567.40px;height:52px;line-height:52px;font-size:26px;color:#e2e2e2;font-weight:400;font-family:'Liberation Sans', sans-serif;letter-spacing:0.078px;">ad</div>
<div class="t" style="left:1394.00px;top:1567.40px;height:52px;line-height:52px;font-size:26px;color:#a3a3a3;font-weight:400;font-family:'Liberation Sans', sans-serif;letter-spacing:0.047px;">trace</div>
<div class="t" style="left:1624.70px;top:1566.80px;height:52px;line-height:52px;font-size:26px;color:#dedede;font-weight:400;font-family:'Liberation Sans', sans-serif;letter-spacing:-0.179px;">2025-05-26 11:23:05 - oteldemo.AdService - Non-targeted ad request received, preparing random response. trace_id=fdec60bf877a1deab6a6712035204012 span_id=3...</div>
<svg class="b" style="left:680.00px;top:1627.60px;" width="20.00" height="22.00" viewBox="0 0 20 22" fill="none" stroke="#bbb" stroke-width="1.8" stroke-linecap="round" stroke-linejoin="round"><path d="M4.5 2l8.6 9l-8.6 9"/></svg>
<div class="b" style="left:712.8px;top:1628.6000000000001px;width:2.00px;height:20.00px;background:#333;border-radius:0px;"></div>
<div class="t" style="left:734.00px;top:1612.60px;height:52px;line-height:52px;font-size:26px;color:#c0c0c8;font-weight:400;font-family:'Liberation Sans', sans-serif;letter-spacing:-0.605px;">Feb 3 5:24:41.889 PM</div>
<div class="t" style="left:1074.40px;top:1612.60px;height:52px;line-height:52px;font-size:26px;color:#e2e2e2;font-weight:400;font-family:'Liberation Sans', sans-serif;letter-spacing:0.078px;">ad</div>
<div class="t" style="left:1394.00px;top:1614.60px;height:48px;line-height:48px;font-size:24px;color:#a3a3a3;font-weight:400;font-family:'Liberation Sans', sans-serif;letter-spacing:-0.376px;">INFO</div>
<div class="t" style="left:1624.70px;top:1612.00px;height:52px;line-height:52px;font-size:26px;color:#dedede;font-weight:400;font-family:'Liberation Sans', sans-serif;letter-spacing:-0.089px;">Targeted ad request received for [assembly]</div>
<svg class="b" style="left:680.00px;top:1672.80px;" width="20.00" height="22.00" viewBox="0 0 20 22" fill="none" stroke="#bbb" stroke-width="1.8" stroke-linecap="round" stroke-linejoin="round"><path d="M4.5 2l8.6 9l-8.6 9"/></svg>
<div class="b" style="left:712.8px;top:1673.8000000000002px;width:2.00px;height:20.00px;background:#333;border-radius:0px;"></div>
<div class="t" style="left:734.00px;top:1657.80px;height:52px;line-height:52px;font-size:26px;color:#c0c0c8;font-weight:400;font-family:'Liberation Sans', sans-serif;letter-spacing:-0.605px;">Feb 3 5:24:41.889 PM</div>
<div class="t" style="left:1074.40px;top:1657.80px;height:52px;line-height:52px;font-size:26px;color:#e2e2e2;font-weight:400;font-family:'Liberation Sans', sans-serif;letter-spacing:0.078px;">ad</div>
<div class="t" style="left:1394.00px;top:1659.80px;height:48px;line-height:48px;font-size:24px;color:#a3a3a3;font-weight:400;font-family:'Liberation Sans', sans-serif;letter-spacing:-0.376px;">INFO</div>
<div class="t" style="left:1624.70px;top:1657.20px;height:52px;line-height:52px;font-size:26px;color:#dedede;font-weight:400;font-family:'Liberation Sans', sans-serif;letter-spacing:-0.089px;">Targeted ad request received for [assembly]</div>
<svg class="b" style="left:680.00px;top:1718.00px;" width="20.00" height="22.00" viewBox="0 0 20 22" fill="none" stroke="#bbb" stroke-width="1.8" stroke-linecap="round" stroke-linejoin="round"><path d="M4.5 2l8.6 9l-8.6 9"/></svg>
<div class="b" style="left:712.8px;top:1719.0px;width:2.00px;height:20.00px;background:#333;border-radius:0px;"></div>
<div class="t" style="left:734.00px;top:1703.00px;height:52px;line-height:52px;font-size:26px;color:#c0c0c8;font-weight:400;font-family:'Liberation Sans', sans-serif;letter-spacing:-0.605px;">Feb 3 5:24:41.889 PM</div>
<div class="t" style="left:1074.40px;top:1703.00px;height:52px;line-height:52px;font-size:26px;color:#e2e2e2;font-weight:400;font-family:'Liberation Sans', sans-serif;letter-spacing:0.078px;">ad</div>
<div class="t" style="left:1394.00px;top:1703.00px;height:52px;line-height:52px;font-size:26px;color:#a3a3a3;font-weight:400;font-family:'Liberation Sans', sans-serif;letter-spacing:0.047px;">trace</div>
<div class="t" style="left:1624.70px;top:1702.40px;height:52px;line-height:52px;font-size:26px;color:#dedede;font-weight:400;font-family:'Liberation Sans', sans-serif;letter-spacing:-0.048px;">2025-05-26 11:23:05 - oteldemo.AdService - Targeted ad request received for [books] trace_id=731eeb72c95cb8c5b2ab2ba335430d3d span_id=293a0347bf0d7a9a tr...</div>
<svg class="b" style="left:680.00px;top:1763.20px;" width="20.00" height="22.00" viewBox="0 0 20 22" fill="none" stroke="#bbb" stroke-width="1.8" stroke-linecap="round" stroke-linejoin="round"><path d="M4.5 2l8.6 9l-8.6 9"/></svg>
<div class="b" style="left:712.8px;top:1764.2px;width:2.00px;height:20.00px;background:#333;border-radius:0px;"></div>
<div class="t" style="left:734.00px;top:1748.20px;height:52px;line-height:52px;font-size:26px;color:#c0c0c8;font-weight:400;font-family:'Liberation Sans', sans-serif;letter-spacing:-0.605px;">Feb 3 5:24:41.889 PM</div>
<div class="t" style="left:1074.40px;top:1748.20px;height:52px;line-height:52px;font-size:26px;color:#e2e2e2;font-weight:400;font-family:'Liberation Sans', sans-serif;letter-spacing:0.078px;">ad</div>
<div class="t" style="left:1394.00px;top:1748.20px;height:52px;line-height:52px;font-size:26px;color:#a3a3a3;font-weight:400;font-family:'Liberation Sans', sans-serif;letter-spacing:0.047px;">trace</div>
<div class="t" style="left:1624.70px;top:1747.60px;height:52px;line-height:52px;font-size:26px;color:#dedede;font-weight:400;font-family:'Liberation Sans', sans-serif;letter-spacing:-0.079px;">2025-05-26 11:23:05 - oteldemo.AdService - Targeted ad request received for [telescopes] trace_id=234a9b08090ab4c3fa755506707008d7 span_id=74b7e26de318cb...</div>
<svg class="b" style="left:680.00px;top:1808.40px;" width="20.00" height="22.00" viewBox="0 0 20 22" fill="none" stroke="#bbb" stroke-width="1.8" stroke-linecap="round" stroke-linejoin="round"><path d="M4.5 2l8.6 9l-8.6 9"/></svg>
<div class="b" style="left:712.8px;top:1809.4px;width:2.00px;height:20.00px;background:#333;border-radius:0px;"></div>
<div class="t" style="left:734.00px;top:1793.40px;height:52px;line-height:52px;font-size:26px;color:#c0c0c8;font-weight:400;font-family:'Liberation Sans', sans-serif;letter-spacing:-0.605px;">Feb 3 5:24:41.889 PM</div>
<div class="t" style="left:1074.40px;top:1793.40px;height:52px;line-height:52px;font-size:26px;color:#e2e2e2;font-weight:400;font-family:'Liberation Sans', sans-serif;letter-spacing:0.078px;">ad</div>
<div class="t" style="left:1394.00px;top:1795.40px;height:48px;line-height:48px;font-size:24px;color:#a3a3a3;font-weight:400;font-family:'Liberation Sans', sans-serif;letter-spacing:-0.376px;">INFO</div>
<div class="t" style="left:1624.70px;top:1792.80px;height:52px;line-height:52px;font-size:26px;color:#dedede;font-weight:400;font-family:'Liberation Sans', sans-serif;letter-spacing:-0.055px;">Targeted ad request received for [telescopes]</div>
<svg class="b" style="left:680.00px;top:1853.60px;" width="20.00" height="22.00" viewBox="0 0 20 22" fill="none" stroke="#bbb" stroke-width="1.8" stroke-linecap="round" stroke-linejoin="round"><path d="M4.5 2l8.6 9l-8.6 9"/></svg>
<div class="b" style="left:712.8px;top:1854.6000000000001px;width:2.00px;height:20.00px;background:#333;border-radius:0px;"></div>
<div class="t" style="left:734.00px;top:1838.60px;height:52px;line-height:52px;font-size:26px;color:#c0c0c8;font-weight:400;font-family:'Liberation Sans', sans-serif;letter-spacing:-0.605px;">Feb 3 5:24:41.889 PM</div>
<div class="t" style="left:1074.40px;top:1838.60px;height:52px;line-height:52px;font-size:26px;color:#e2e2e2;font-weight:400;font-family:'Liberation Sans', sans-serif;letter-spacing:0.078px;">ad</div>
<div class="t" style="left:1394.00px;top:1840.60px;height:48px;line-height:48px;font-size:24px;color:#a3a3a3;font-weight:400;font-family:'Liberation Sans', sans-serif;letter-spacing:-0.376px;">INFO</div>
<div class="t" style="left:1624.70px;top:1838.00px;height:52px;line-height:52px;font-size:26px;color:#dedede;font-weight:400;font-family:'Liberation Sans', sans-serif;letter-spacing:-0.089px;">Targeted ad request received for [assembly]</div>
<div class="b" style="left:3513.4px;top:937.7px;width:70px;height:70px;border-radius:50%;background:#0b0b0b;border:2px solid #3a3a3a;box-sizing:border-box;box-shadow:0 4px 16px rgba(0,0,0,.6)"></div>
<svg class="b" style="left:3513.4px;top:937.7px" width="70" height="70" viewBox="0 0 70 70"><path d="M24 27h24M31 34.5h17M31 43h17" stroke="#fff" stroke-width="3.5"/><circle cx="22.6" cy="42.3" r="7.3" fill="#fff"/><path d="M22.6 37.6l4 6.6h-8z" fill="#0b0b0b"/></svg>
</div>
<div class="b" style="left:0;top:1700px;width:3600px;height:168px;border-radius:0 0 24px 24px;box-shadow:0 0 0 1.5px #3e4557;clip-path:inset(120px -4px -4px -4px)"></div>
</body></html>
